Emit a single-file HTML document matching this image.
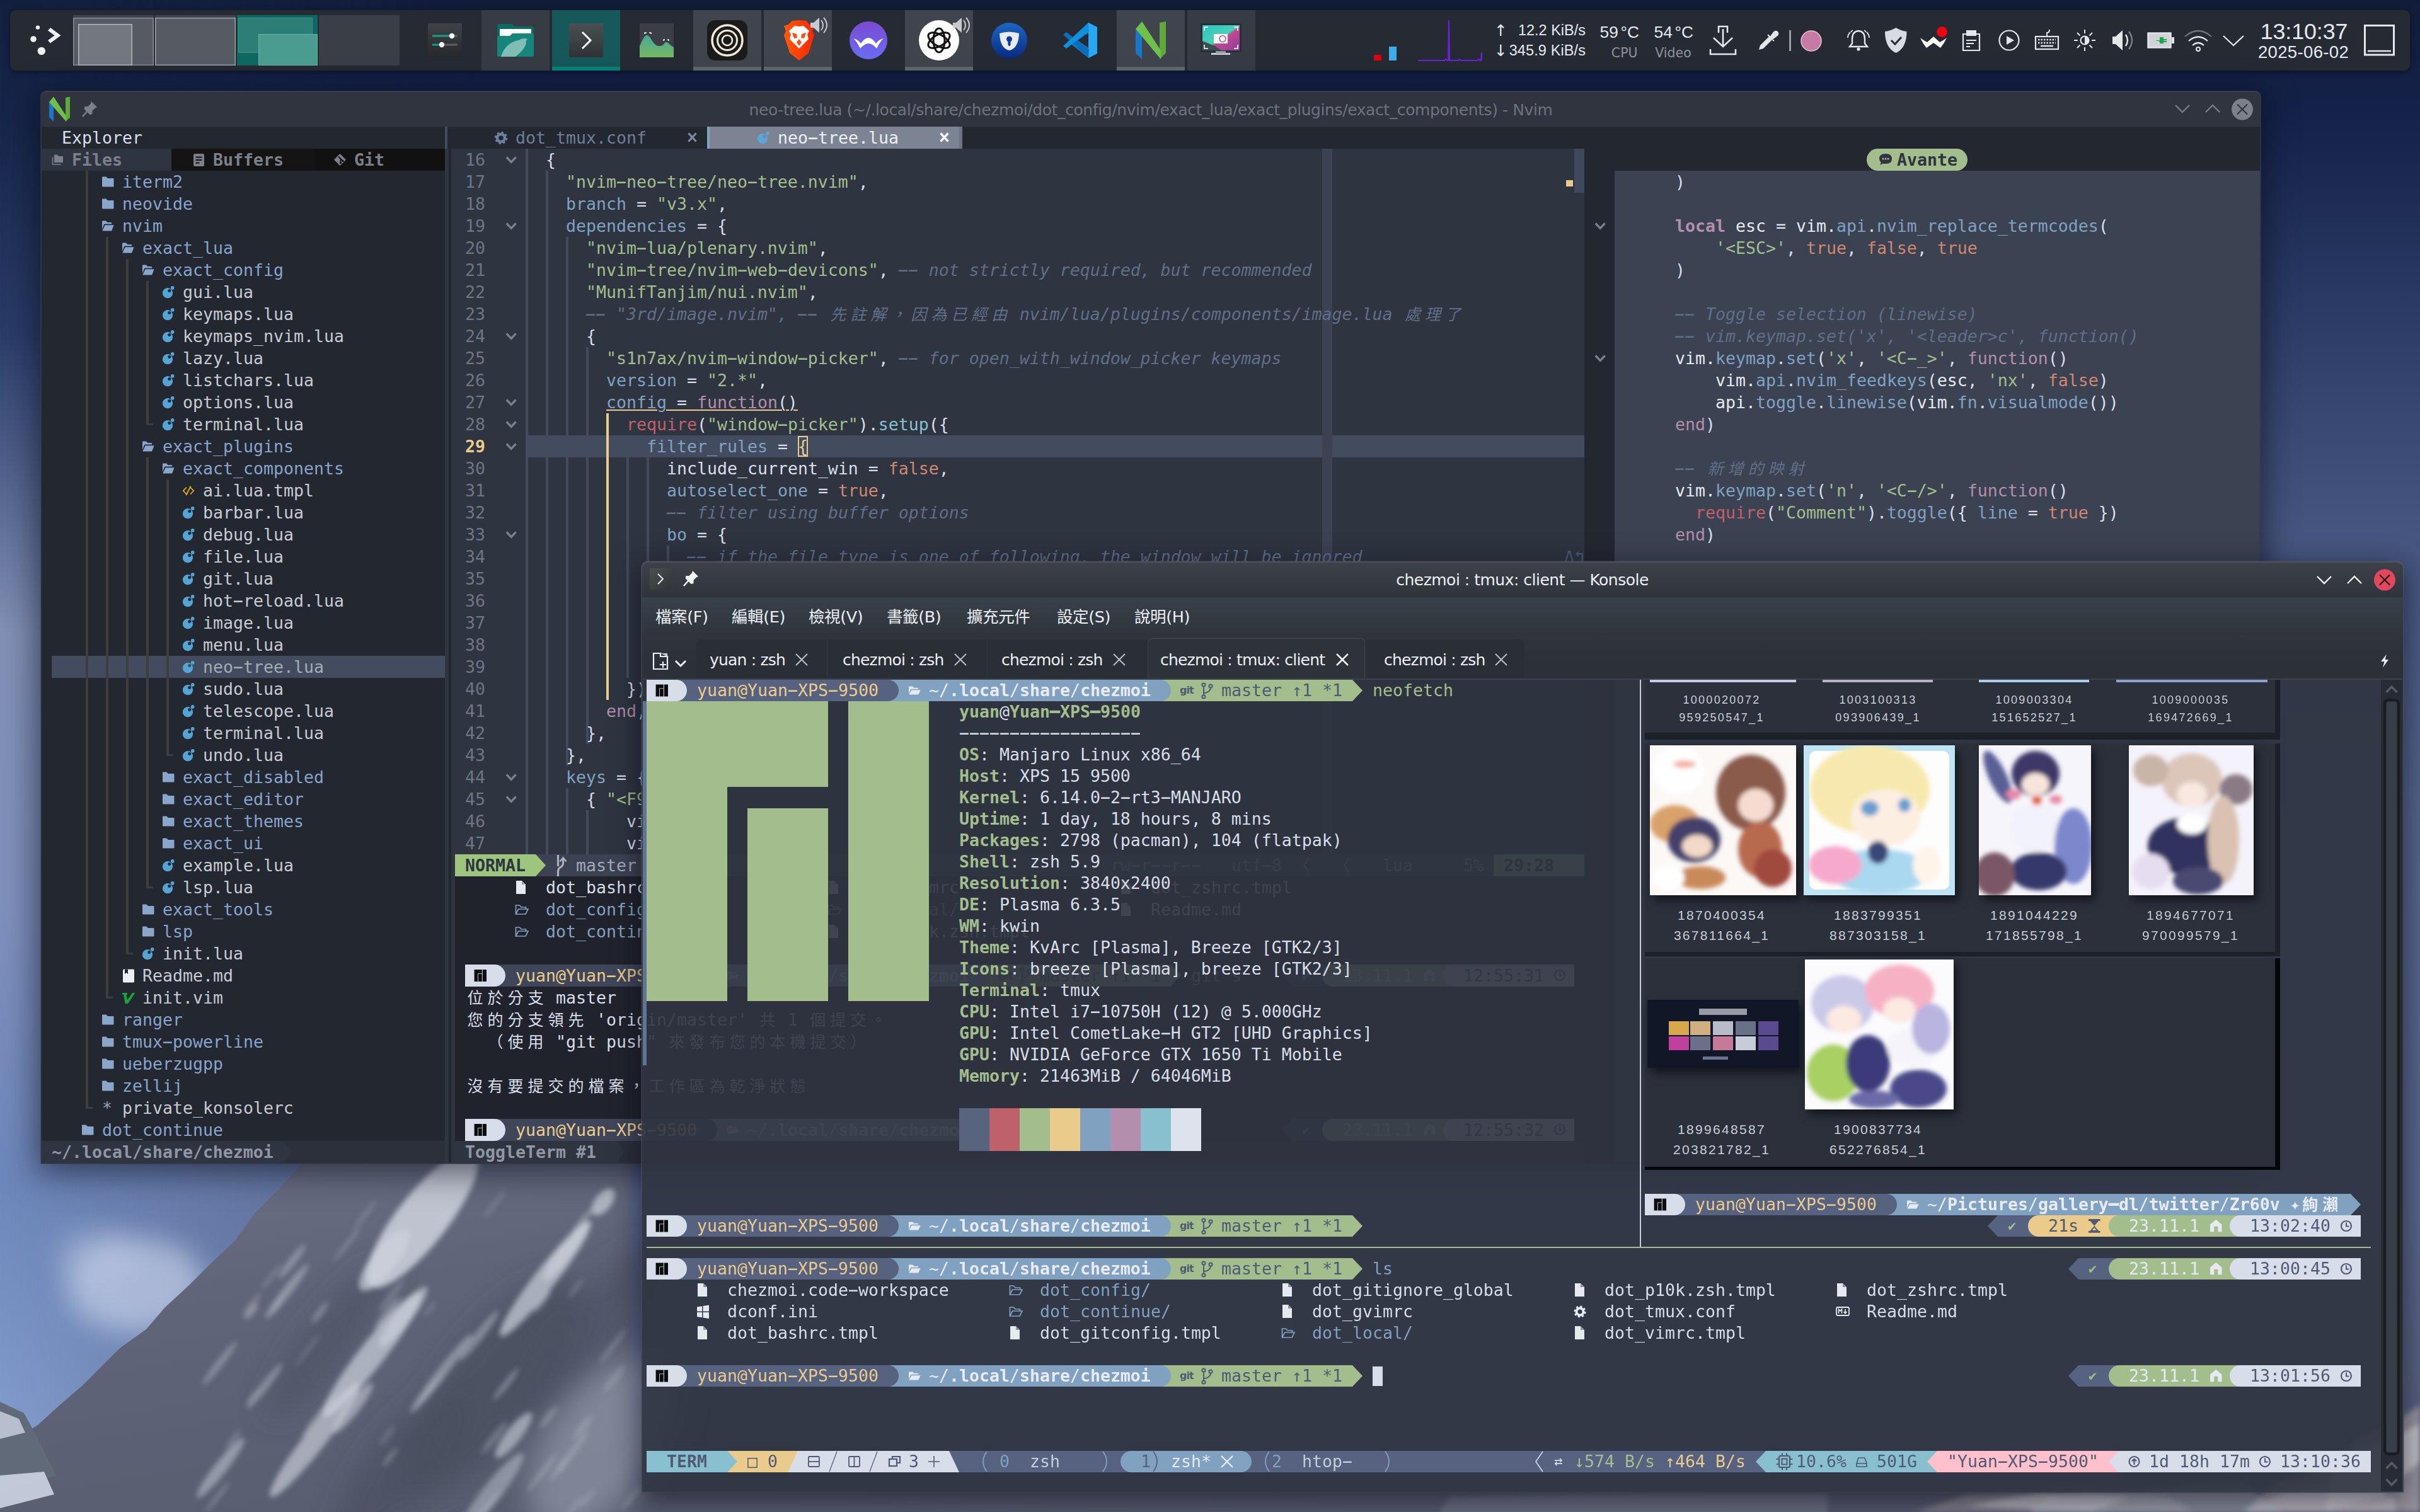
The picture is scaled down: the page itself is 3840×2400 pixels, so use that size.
<!DOCTYPE html><html><head><meta charset="utf-8"><title>desktop</title><style>
html,body{margin:0;padding:0}
body{width:3840px;height:2400px;overflow:hidden;position:relative;background:#1a2648;font-family:"Liberation Sans","Noto Sans CJK TC",sans-serif}
.a{position:absolute;display:block}
i.a{font-style:normal}
.g{white-space:pre;font:26.576px/35px "DejaVu Sans Mono","Noto Sans CJK TC",monospace;height:35px;color:#d8dee9}
.k{white-space:pre;font:26.576px/34px "DejaVu Sans Mono","Noto Sans CJK TC",monospace;height:34px;color:#d8dee9}
b.w{display:inline-block;width:32px;text-align:center;font-weight:inherit;font-size:25px}
b.h{display:inline-block;font-weight:inherit;transform:translateY(-1px) scale(2.02,1.15)}
.ui{white-space:pre;font-family:"DejaVu Sans","Noto Sans CJK TC",sans-serif;color:#e5e9f0}
</style></head><body>
<svg class=a style="left:0;top:0" width="3840" height="2400" viewBox="0 0 3840 2400">
<defs>
<linearGradient id="sky" x1="0" y1="0" x2="0" y2="1">
<stop offset="0" stop-color="#13203f"/><stop offset="0.08" stop-color="#17264a"/><stop offset="0.22" stop-color="#2b3c68"/>
<stop offset="0.32" stop-color="#55658f"/><stop offset="0.42" stop-color="#8391b6"/><stop offset="0.6" stop-color="#7f90bc"/><stop offset="0.78" stop-color="#6d87bb"/><stop offset="1" stop-color="#89a3d3"/>
</linearGradient>
<linearGradient id="skyr" x1="0" y1="0" x2="0" y2="1">
<stop offset="0" stop-color="#111c3a"/><stop offset="0.08" stop-color="#15224a"/><stop offset="0.2" stop-color="#2a3a64"/>
<stop offset="0.35" stop-color="#46557f"/><stop offset="0.55" stop-color="#57668f"/><stop offset="0.8" stop-color="#5b678c"/><stop offset="1" stop-color="#565d78"/>
</linearGradient>
<linearGradient id="fade" x1="0" y1="0" x2="1" y2="0">
<stop offset="0" stop-color="#fff" stop-opacity="0"/><stop offset="0.03" stop-color="#fff" stop-opacity="0.15"/><stop offset="0.2" stop-color="#fff" stop-opacity="1"/><stop offset="1" stop-color="#fff" stop-opacity="1"/>
</linearGradient>
<mask id="mk"><rect width="3840" height="2400" fill="url(#fade)"/></mask>
<filter id="bl" x="-20%" y="-20%" width="140%" height="140%"><feGaussianBlur stdDeviation="4"/></filter>
<filter id="bl2" x="-30%" y="-30%" width="160%" height="160%"><feGaussianBlur stdDeviation="22"/></filter>
<linearGradient id="mt" x1="0" y1="0" x2="1" y2="1">
<stop offset="0" stop-color="#6b7086"/><stop offset="0.25" stop-color="#5f6478"/><stop offset="0.6" stop-color="#585d70"/><stop offset="1" stop-color="#53576a"/>
</linearGradient>
</defs>
<rect width="3840" height="2400" fill="url(#sky)"/>
<rect width="3840" height="2400" fill="url(#skyr)" mask="url(#mk)"/>
<ellipse cx="215" cy="2040" rx="110" ry="75" fill="#d3dcf0" opacity=".6" filter="url(#bl2)"/>
<ellipse cx="150" cy="1990" rx="60" ry="40" fill="#c3cee8" opacity=".35" filter="url(#bl2)"/>
<path d="M478 1848 L440 1890 L405 1925 L372 1970 L330 2010 L300 2040 L262 2075 L232 2110 L190 2140 L160 2170 L130 2200 L95 2230 L60 2262 L0 2300 L0 2400 L3840 2400 L3840 2262 L3800 2290 L3720 2335 L3560 2345 L3300 2362 L1000 2362 L1000 1848 Z" fill="url(#mt)"/>
<g filter="url(#bl2)"><ellipse cx="960" cy="2290" rx="165" ry="85" fill="#9a9eb0" opacity="0.6" transform="rotate(-52 960 2290)"/><ellipse cx="780" cy="2200" rx="210" ry="75" fill="#474c5c" opacity="0.7" transform="rotate(-52 780 2200)"/><ellipse cx="520" cy="2130" rx="150" ry="35" fill="#4b5061" opacity="0.6" transform="rotate(-52 520 2130)"/><ellipse cx="930" cy="2120" rx="180" ry="45" fill="#4a4f60" opacity="0.6" transform="rotate(-52 930 2120)"/><ellipse cx="640" cy="2330" rx="150" ry="55" fill="#484d5d" opacity="0.6" transform="rotate(-52 640 2330)"/></g>
<g filter="url(#bl)"><ellipse cx="670" cy="1935" rx="135" ry="40" fill="#cfd3de" opacity="0.85" transform="rotate(-52 670 1935)"/><ellipse cx="610" cy="2000" rx="60" ry="20" fill="#cfd3de" opacity="0.7" transform="rotate(-52 610 2000)"/><ellipse cx="865" cy="2030" rx="115" ry="17" fill="#cfd3de" opacity="0.7" transform="rotate(-52 865 2030)"/><ellipse cx="900" cy="1985" rx="60" ry="11" fill="#cfd3de" opacity="0.6" transform="rotate(-52 900 1985)"/><ellipse cx="590" cy="2150" rx="125" ry="20" fill="#cfd3de" opacity="0.7" transform="rotate(-52 590 2150)"/><ellipse cx="640" cy="2090" rx="60" ry="13" fill="#cfd3de" opacity="0.6" transform="rotate(-52 640 2090)"/><ellipse cx="500" cy="2285" rx="115" ry="17" fill="#cfd3de" opacity="0.65" transform="rotate(-52 500 2285)"/><ellipse cx="560" cy="2235" rx="50" ry="10" fill="#cfd3de" opacity="0.55" transform="rotate(-52 560 2235)"/><ellipse cx="957" cy="1908" rx="25" ry="13" fill="#cfd3de" opacity="0.7" transform="rotate(-52 957 1908)"/><ellipse cx="815" cy="2278" rx="45" ry="12" fill="#cfd3de" opacity="0.6" transform="rotate(-52 815 2278)"/><ellipse cx="455" cy="2050" rx="55" ry="7" fill="#cfd3de" opacity="0.45" transform="rotate(-52 455 2050)"/><ellipse cx="700" cy="2180" rx="80" ry="8" fill="#cfd3de" opacity="0.45" transform="rotate(-52 700 2180)"/><ellipse cx="760" cy="2120" rx="50" ry="7" fill="#cfd3de" opacity="0.4" transform="rotate(-52 760 2120)"/><ellipse cx="420" cy="2200" rx="45" ry="6" fill="#cfd3de" opacity="0.4" transform="rotate(-52 420 2200)"/><ellipse cx="350" cy="2330" rx="60" ry="10" fill="#cfd3de" opacity="0.5" transform="rotate(-52 350 2330)"/><ellipse cx="780" cy="2370" rx="80" ry="15" fill="#cfd3de" opacity="0.45" transform="rotate(-52 780 2370)"/><ellipse cx="550.206" cy="1975.42" rx="34.528" ry="2.75353" fill="#cfd3de" opacity="0.333971" transform="rotate(-52 550.206 1975.42)"/><ellipse cx="578.668" cy="1929" rx="30.2231" ry="2.63123" fill="#cfd3de" opacity="0.308411" transform="rotate(-52 578.668 1929)"/><ellipse cx="618.673" cy="2313.43" rx="18.7141" ry="3.28134" fill="#cfd3de" opacity="0.356858" transform="rotate(-52 618.673 2313.43)"/><ellipse cx="974.442" cy="2188.55" rx="26.9004" ry="5.91689" fill="#cfd3de" opacity="0.211646" transform="rotate(-52 974.442 2188.55)"/><ellipse cx="913.759" cy="2044.8" rx="19.3277" ry="2.91227" fill="#cfd3de" opacity="0.27712" transform="rotate(-52 913.759 2044.8)"/><ellipse cx="884.966" cy="1990.36" rx="32.448" ry="4.7362" fill="#cfd3de" opacity="0.293099" transform="rotate(-52 884.966 1990.36)"/><ellipse cx="702.466" cy="1931.39" rx="16.788" ry="3.22086" fill="#cfd3de" opacity="0.3701" transform="rotate(-52 702.466 1931.39)"/><ellipse cx="620.763" cy="2057.07" rx="32.5669" ry="4.08615" fill="#cfd3de" opacity="0.274942" transform="rotate(-52 620.763 2057.07)"/><ellipse cx="870.178" cy="2249.5" rx="22.3229" ry="4.51048" fill="#cfd3de" opacity="0.331299" transform="rotate(-52 870.178 2249.5)"/><ellipse cx="925.093" cy="2264.72" rx="23.6381" ry="5.93061" fill="#cfd3de" opacity="0.229516" transform="rotate(-52 925.093 2264.72)"/><ellipse cx="614.324" cy="2278.57" rx="19.5595" ry="4.21137" fill="#cfd3de" opacity="0.209802" transform="rotate(-52 614.324 2278.57)"/><ellipse cx="784.387" cy="2282.29" rx="32.1908" ry="5.56417" fill="#cfd3de" opacity="0.278437" transform="rotate(-52 784.387 2282.29)"/><ellipse cx="802.801" cy="2197.18" rx="32.3969" ry="4.09672" fill="#cfd3de" opacity="0.409992" transform="rotate(-52 802.801 2197.18)"/><ellipse cx="972.383" cy="2137.05" rx="34.9246" ry="2.71234" fill="#cfd3de" opacity="0.375373" transform="rotate(-52 972.383 2137.05)"/><ellipse cx="770.048" cy="2396.55" rx="39.6577" ry="3.49608" fill="#cfd3de" opacity="0.296448" transform="rotate(-52 770.048 2396.55)"/><ellipse cx="784.684" cy="1911.28" rx="28.8509" ry="3.08817" fill="#cfd3de" opacity="0.229274" transform="rotate(-52 784.684 1911.28)"/><ellipse cx="370.089" cy="2284.12" rx="18.8802" ry="3.36665" fill="#cfd3de" opacity="0.297737" transform="rotate(-52 370.089 2284.12)"/><ellipse cx="922.567" cy="1940.29" rx="28.4756" ry="4.42304" fill="#cfd3de" opacity="0.420846" transform="rotate(-52 922.567 1940.29)"/><ellipse cx="887.11" cy="2331.99" rx="23.3526" ry="3.95354" fill="#cfd3de" opacity="0.289693" transform="rotate(-52 887.11 2331.99)"/><ellipse cx="931.251" cy="2378.87" rx="19.5276" ry="3.11676" fill="#cfd3de" opacity="0.257989" transform="rotate(-52 931.251 2378.87)"/><ellipse cx="488.669" cy="2142.48" rx="32.6737" ry="3.41961" fill="#cfd3de" opacity="0.201023" transform="rotate(-52 488.669 2142.48)"/><ellipse cx="614.884" cy="2084.63" rx="31.9902" ry="5.83584" fill="#cfd3de" opacity="0.372623" transform="rotate(-52 614.884 2084.63)"/><ellipse cx="680.534" cy="2208.8" rx="35.286" ry="2.68898" fill="#cfd3de" opacity="0.424883" transform="rotate(-52 680.534 2208.8)"/><ellipse cx="860.379" cy="2337.26" rx="38.9362" ry="3.87333" fill="#cfd3de" opacity="0.299745" transform="rotate(-52 860.379 2337.26)"/><ellipse cx="400.405" cy="2217.14" rx="16.8674" ry="2.73572" fill="#cfd3de" opacity="0.252191" transform="rotate(-52 400.405 2217.14)"/><ellipse cx="440.366" cy="2070.03" rx="16.5773" ry="2.50082" fill="#cfd3de" opacity="0.237816" transform="rotate(-52 440.366 2070.03)"/><ellipse cx="398.996" cy="2081.8" rx="15.765" ry="5.56016" fill="#cfd3de" opacity="0.353517" transform="rotate(-52 398.996 2081.8)"/><ellipse cx="431.014" cy="2026.13" rx="25.4217" ry="3.77457" fill="#cfd3de" opacity="0.230711" transform="rotate(-52 431.014 2026.13)"/><ellipse cx="907.277" cy="2396.55" rx="28.9797" ry="4.19342" fill="#cfd3de" opacity="0.221471" transform="rotate(-52 907.277 2396.55)"/><ellipse cx="399.488" cy="2071.32" rx="22.9427" ry="5.40099" fill="#cfd3de" opacity="0.24036" transform="rotate(-52 399.488 2071.32)"/><ellipse cx="345.705" cy="2375.49" rx="30.8477" ry="3.01311" fill="#cfd3de" opacity="0.335793" transform="rotate(-52 345.705 2375.49)"/><ellipse cx="348.389" cy="2164.05" rx="44.355" ry="5.52164" fill="#cfd3de" opacity="0.374049" transform="rotate(-52 348.389 2164.05)"/><ellipse cx="507.558" cy="2083.35" rx="20.0113" ry="5.20178" fill="#cfd3de" opacity="0.333148" transform="rotate(-52 507.558 2083.35)"/><ellipse cx="859.757" cy="2064.83" rx="21.6913" ry="5.34029" fill="#cfd3de" opacity="0.446232" transform="rotate(-52 859.757 2064.83)"/><ellipse cx="909.788" cy="2303.04" rx="39.55" ry="5.08956" fill="#cfd3de" opacity="0.256685" transform="rotate(-52 909.788 2303.04)"/><ellipse cx="681.994" cy="2077.78" rx="15.8694" ry="2.59778" fill="#cfd3de" opacity="0.269855" transform="rotate(-52 681.994 2077.78)"/><ellipse cx="506.239" cy="2246.26" rx="43.6955" ry="4.0653" fill="#cfd3de" opacity="0.434255" transform="rotate(-52 506.239 2246.26)"/><ellipse cx="1001.87" cy="2377.5" rx="25.9391" ry="3.27162" fill="#cfd3de" opacity="0.256711" transform="rotate(-52 1001.87 2377.5)"/><ellipse cx="463.76" cy="2002.19" rx="33.722" ry="5.65108" fill="#cfd3de" opacity="0.410109" transform="rotate(-52 463.76 2002.19)"/>
<path d="M3560 2400 l40 -40 l90 -30 l60 -50 l60 -30 l30 -20 l0 170 z" fill="#9c98a2" opacity=".95"/><path d="M3700 2340 l60 -40 l80 -40 l0 60 l-60 50 l-90 30 z" fill="#cfccd4" opacity=".85"/><path d="M3560 2400 l60 -30 l120 -20 l60 30 l0 20 z" fill="#c4c1c9" opacity=".7"/><path d="M3040 2400 l80 -28 l200 -8 l120 12 l40 24 z" fill="#8b8791" opacity=".8"/><path d="M3120 2390 l120 -20 l140 6 l-60 24 z" fill="#c9c6ce" opacity=".7"/>
<path d="M3250 2372 l150 -8 l160 -12 l60 50 l-400 0 z" fill="#b9bdca" opacity=".5"/>
<path d="M2300 2375 l300 -6 l300 0 l0 40 l-620 0 z" fill="#8d91a2" opacity=".35"/>
</g>
<path d="M0 2225 l38 18 l22 40 l30 60 l-90 20 z" fill="#606a78"/>
<path d="M0 2240 l30 12 l10 22 l-40 10 z" fill="#cdd5e4" opacity=".8"/>
<path d="M0 2342 l70 -6 l16 36 l-86 22 z" fill="#d3dbea" opacity=".85"/>
</svg>
<i class=a style="left:16px;top:16px;width:3808px;height:96px;background:#262b33;border-radius:9px;box-shadow:0 2px 10px rgba(0,0,0,.45)"></i>
<svg class=a style="left:44px;top:36px;" width="60" height="56" viewBox="0 0 60 56"><g fill="#eef0f3"><circle cx="16" cy="7.6" r="3.2"/><circle cx="9" cy="26" r="4.8"/><circle cx="21.8" cy="45" r="6.2"/><path d="M32 12.5l4-4.5 16.5 12.2L36 32.5l-4-4.6 10.5-7.7z"/></g></svg>
<i class=a style="left:116px;top:24px;width:128px;height:80px;background:#3f444d;"></i>
<i class=a style="left:116px;top:28px;width:128px;height:76px;background:#555a63;box-shadow:inset 0 0 0 1.500px #888b91"></i>
<i class=a style="left:124px;top:38px;width:86px;height:66px;background:#73777f;box-shadow:inset 0 0 0 1.5px #b3b6bb"></i>
<i class=a style="left:246px;top:24px;width:128px;height:80px;background:#3f444d;"></i>
<i class=a style="left:246px;top:28px;width:128px;height:76px;background:#555a63;box-shadow:inset 0 0 0 1.5px #9da0a6"></i>
<i class=a style="left:376px;top:24px;width:128px;height:80px;background:#0f6761;"></i>
<i class=a style="left:378px;top:28px;width:118px;height:56px;background:#2b7f76;box-shadow:inset 0 0 0 1px #3f9288"></i>
<i class=a style="left:410px;top:54px;width:94px;height:50px;background:#4a9c91;box-shadow:inset 0 0 0 1px #66b3a8"></i>
<i class=a style="left:506px;top:24px;width:128px;height:80px;background:#393e47;"></i>
<i class=a style="left:764px;top:16px;width:108px;height:96px;background:#363b44;"></i>
<i class=a style="left:876px;top:16px;width:108px;height:96px;background:#17585a;"></i>
<i class=a style="left:876px;top:106px;width:108px;height:6px;background:#068478;"></i>
<i class=a style="left:1100px;top:16px;width:108px;height:96px;background:#3f444d;"></i>
<i class=a style="left:1100px;top:106px;width:108px;height:6px;background:#62666d;"></i>
<i class=a style="left:1212px;top:16px;width:108px;height:96px;background:#3f444d;"></i>
<i class=a style="left:1212px;top:106px;width:108px;height:6px;background:#62666d;"></i>
<i class=a style="left:1436px;top:16px;width:108px;height:96px;background:#3f444d;"></i>
<i class=a style="left:1436px;top:106px;width:108px;height:6px;background:#62666d;"></i>
<i class=a style="left:1772px;top:16px;width:108px;height:96px;background:#3f444d;"></i>
<i class=a style="left:1772px;top:106px;width:108px;height:6px;background:#62666d;"></i>
<i class=a style="left:1884px;top:16px;width:108px;height:96px;background:#363b44;"></i>
<svg class=a style="left:679px;top:37px;" width="54" height="54" viewBox="0 0 54 54"><defs><linearGradient id="dk" x1="0" y1="0" x2="0" y2="1"><stop offset="0" stop-color="#404349"/><stop offset="1" stop-color="#25272b"/></linearGradient></defs><rect width="54" height="54" rx="2" fill="url(#dk)"/><path d="M7 20h32M7 34h16" stroke="#16a085" stroke-width="3"/><path d="M39 20h8M23 34h24" stroke="#5a5e66" stroke-width="3"/><circle cx="38" cy="20" r="4.2" fill="#fff"/><circle cx="22" cy="34" r="4.2" fill="#fff"/></svg>
<svg class=a style="left:789px;top:37px;" width="58" height="54" viewBox="0 0 58 54"><path d="M0 4q0-3 3-3h20l4 4h28q3 0 3 3v42q0 3-3 3H3q-3 0-3-3z" fill="#0a6b62"/><rect x="4" y="9" width="50" height="20" fill="#fdfdfd"/><path d="M0 22q0-2 2-2h18l4-4h32q2 0 2 2v32q0 3-3 3H3q-3 0-3-3z" fill="#16857a"/><path d="M6 53c4-14 14-24 28-26 4-3 10-4 14-2-2 2-3 4-2 6-2 8-8 15-17 22z" fill="#7fbdb5"/></svg>
<svg class=a style="left:903px;top:37px;" width="54" height="54" viewBox="0 0 54 54"><rect width="54" height="54" rx="2" fill="url(#dk2)"/><defs><linearGradient id="dk2" x1="0" y1="0" x2="0" y2="1"><stop offset="0" stop-color="#4a5052"/><stop offset="1" stop-color="#2f3335"/></linearGradient></defs><path d="M21 14l13 13-13 13" fill="none" stroke="#fff" stroke-width="3"/></svg>
<svg class=a style="left:1015px;top:37px;" width="54" height="54" viewBox="0 0 54 54"><defs><linearGradient id="gm" x1="0" y1="0" x2="0" y2="1"><stop offset="0" stop-color="#4aa89a"/><stop offset="1" stop-color="#74b860"/></linearGradient></defs><rect width="54" height="54" fill="#3b3f45"/><path d="M0 36c4-8 7-17 12-17s9 16 18 17 8-6 12-6 6 5 12 8v16H0z" fill="url(#gm)"/><path d="M8 17v-2h3m4 0h3v2M38 28v-2h2m4 0h2v2" stroke="#fff" stroke-width="1.3" fill="none"/></svg>
<svg class=a style="left:1122px;top:32px;" width="64" height="64" viewBox="0 0 64 64"><rect width="64" height="64" rx="13" fill="#1b1b1b"/><g fill="none" stroke="#efe9d6"><circle cx="32" cy="32" r="24" stroke-width="3.5"/><circle cx="32" cy="32" r="15.5" stroke-width="3"/><circle cx="32" cy="32" r="8" stroke-width="2.6"/></g></svg>
<svg class=a style="left:1238px;top:30px;" width="60" height="68" viewBox="0 0 60 68"><defs><linearGradient id="br" x1="0" y1="0" x2="1" y2="0"><stop offset="0" stop-color="#ff5a0a"/><stop offset="1" stop-color="#ff2500"/></linearGradient></defs><path d="M30 2l11 1 6 6 7 2-3 8 3 7-9 28-15 12-15-12-9-28 3-7-3-8 7-2 6-6z" fill="url(#br)"/><path d="M30 12l7-1 9 8-3 6 2 7-8 8-7 7-7-7-8-8 2-7-3-6 9-8z" fill="#fff"/><path d="M19 22l7 2 1 6-5 1zM41 22l-7 2-1 6 5 1zM30 32l4 5-4 6-4-6z" fill="#ff4a10"/></svg>
<svg class=a style="left:1284px;top:27px;" width="30" height="26" viewBox="0 0 30 26"><path d="M2 9h5l9-8v24l-9-8H2z" fill="#c8cacd"/><path d="M19 5q6 8 0 16M23 1q10 12 0 24" fill="none" stroke="#c8cacd" stroke-width="2"/></svg>
<svg class=a style="left:1348px;top:34px;" width="60" height="60" viewBox="0 0 60 60"><defs><linearGradient id="pw" x1="0" y1="0" x2="0" y2="1"><stop offset="0" stop-color="#7a4bd2"/><stop offset="1" stop-color="#6b6cf4"/></linearGradient></defs><circle cx="30" cy="30" r="30" fill="url(#pw)"/><path d="M6 27q8 2 12 8 6-9 12-9t12 9q4-6 12-8-5 4-11 16-7-8-13-8t-13 8Q11 31 6 27z" fill="#fff"/></svg>
<svg class=a style="left:1458px;top:32px;" width="64" height="64" viewBox="0 0 64 64"><circle cx="32" cy="32" r="32" fill="#fff"/><g fill="none" stroke="#111" stroke-width="3"><ellipse cx="32" cy="32" rx="9" ry="19"/><ellipse cx="32" cy="32" rx="9" ry="19" transform="rotate(60 32 32)"/><ellipse cx="32" cy="32" rx="9" ry="19" transform="rotate(120 32 32)"/></g></svg>
<svg class=a style="left:1510px;top:27px;" width="30" height="26" viewBox="0 0 30 26"><path d="M2 9h5l9-8v24l-9-8H2z" fill="#c8cacd"/><path d="M19 5q6 8 0 16M23 1q10 12 0 24" fill="none" stroke="#c8cacd" stroke-width="2"/></svg>
<svg class=a style="left:1573px;top:36px;" width="57" height="57" viewBox="0 0 57 57"><defs><linearGradient id="bw" x1="0" y1="0" x2="0" y2="1"><stop offset="0" stop-color="#1c66c4"/><stop offset="1" stop-color="#082a82"/></linearGradient></defs><circle cx="28.5" cy="28.5" r="28.5" fill="url(#bw)"/><path d="M13 17q15-5 31 0-1 24-15.500 27Q14 41 13 17z" fill="#e8ebf5"/><circle cx="28.500" cy="26" r="4.500" fill="#0b3a98"/><rect x="26.500" y="28" width="4" height="9" rx="2" fill="#0b3a98"/></svg>
<svg class=a style="left:1685px;top:35px;" width="58" height="58" viewBox="0 0 58 58"><path d="M42 1l14 7v42l-14 7-30-24z" fill="#0a7fd0"/><path d="M42 1l14 7v42l-14 7z" fill="#2aa7f2"/><path d="M2 20l5-4 36 27-1 14z" fill="#0b6fb8"/><path d="M2 38l5 4 36-27-1-14z" fill="#1190e0"/><path d="M42 17v24L25 29z" fill="#262b33"/></svg>
<svg class=a style="left:1800px;top:32px;" width="52" height="64" viewBox="0 0 52 64"><path d="M2 14l10-10v58L2 52z" fill="#1976c8"/><path d="M40 4l10-2v50L40 62z" fill="#5fa83c"/><path d="M12 2l30 46v14L2 14z" fill="#6fbf4a"/></svg>
<svg class=a style="left:1905px;top:37px;" width="65" height="54" viewBox="0 0 65 54"><rect x="0" y="0" width="65" height="46" fill="#2a2e36"/><defs><linearGradient id="sp" x1="0" y1="0" x2="1" y2="1"><stop offset="0" stop-color="#2fc4c0"/><stop offset="0.5" stop-color="#49d0b8"/><stop offset="0.55" stop-color="#c24a90"/><stop offset="1" stop-color="#8e3c9a"/></linearGradient></defs><rect x="3" y="3" width="59" height="40" fill="url(#sp)"/><path d="M3 43V28l20 8 10 7z" fill="#3a5050"/><rect x="21" y="17" width="22" height="15" fill="#fff"/><circle cx="35" cy="24.500" r="5" fill="none" stroke="#d04080" stroke-width="1.500"/><rect x="17" y="47" width="30" height="3" fill="#c8ccd2"/><rect x="24" y="44" width="16" height="4" fill="#9a9ea6"/><path d="M6 12V6h6M53 6h6v6M6 34v6h6M53 40h6v-6" fill="none" stroke="#fff" stroke-width="1.500"/></svg>
<i class=a style="left:2180px;top:86.5px;width:12px;height:9.5px;background:#e00010;"></i>
<i class=a style="left:2204px;top:74px;width:12px;height:22px;background:#3daee9;"></i>
<svg class=a style="left:2248px;top:30px;" width="110" height="68" viewBox="0 0 110 68"><path d="M2 66h42l2-2 2 2h2l1-64 1 64h14l2-2 2 2h26l2-2 2 2h2l1-13v13" fill="none" stroke="#6a22e0" stroke-width="2"/></svg>
<div class=a style="top:35.85px;font:25px/25px 'DejaVu Sans','Noto Sans CJK TC',sans-serif;color:#e5e9f0;white-space:pre;left:2371px;">↑</div>
<div class=a style="top:67.85px;font:25px/25px 'DejaVu Sans','Noto Sans CJK TC',sans-serif;color:#e5e9f0;white-space:pre;left:2371px;">↓</div>
<div class=a style="top:37.12px;font:23.5px/23.5px 'Liberation Sans','Noto Sans CJK TC',sans-serif;color:#e5e9f0;white-space:pre;left:1916px;width:600px;text-align:right;">12.2 KiB/s</div>
<div class=a style="top:69.12px;font:23.5px/23.5px 'Liberation Sans','Noto Sans CJK TC',sans-serif;color:#e5e9f0;white-space:pre;letter-spacing:0.1px;left:1916px;width:600px;text-align:right;">345.9 KiB/s</div>
<div class=a style="top:37.75px;font:26.3px/26.3px 'Liberation Sans','Noto Sans CJK TC',sans-serif;color:#e5e9f0;white-space:pre;left:2538.5px;word-spacing:-3.500px">59 °C</div>
<div class=a style="top:73.66px;font:20.5px/20.5px 'DejaVu Sans','Noto Sans CJK TC',sans-serif;color:#8e939b;white-space:pre;left:1998.5px;width:600px;text-align:right;">CPU</div>
<div class=a style="top:37.75px;font:26.3px/26.3px 'Liberation Sans','Noto Sans CJK TC',sans-serif;color:#e5e9f0;white-space:pre;left:2624.5px;word-spacing:-3.500px">54 °C</div>
<div class=a style="top:73.66px;font:20.5px/20.5px 'DejaVu Sans','Noto Sans CJK TC',sans-serif;color:#8e939b;white-space:pre;left:1655px;width:2000px;text-align:center;">Video</div>
<svg class=a style="left:2712px;top:40px;" width="44" height="48" viewBox="0 0 44 48"><path d="M15 12V2h14v10M22 6v26M7 20l15 14 15-14M2 38v8h40v-8" fill="none" stroke="#e3e6ea" stroke-width="2.600"/></svg>
<svg class=a style="left:2788px;top:46px;" width="36" height="36" viewBox="0 0 36 36"><path d="M3 33l2-7 14-14 5 5-14 14z" fill="#e3e6ea"/><path d="M17 9l10 10M21 13l6-8q4-3 6 1 1 3-2 5l-7 5z" fill="#e3e6ea" stroke="#e3e6ea" stroke-width="2"/></svg>
<i class=a style="left:2839px;top:48px;width:3px;height:33px;background:#9a9ea6;"></i>
<svg class=a style="left:2856px;top:47px;" width="36" height="36" viewBox="0 0 36 36"><circle cx="18" cy="18" r="16" fill="#c57ba3" stroke="#e6c3d6" stroke-width="1.500"/></svg>
<svg class=a style="left:2930px;top:45px;" width="38" height="38" viewBox="0 0 38 38"><path d="M19 4q-10 1-10 13v7l-4 5h28l-4-5v-7q0-12-10-13z" fill="none" stroke="#e3e6ea" stroke-width="2.400"/><circle cx="19" cy="33" r="2.600" fill="#e3e6ea"/><path d="M6 6q-4 4-4 9M32 6q4 4 4 9M10 3q-2 1-3 3M28 3q2 1 3 3" fill="none" stroke="#e3e6ea" stroke-width="1.800"/></svg>
<svg class=a style="left:2990px;top:43px;" width="37" height="42" viewBox="0 0 37 42"><path d="M18.500 1q8 5 17 6 0 26-17 34Q1 33 1 7q9-1 17.500-6z" fill="#d8dce2"/><path d="M11 21l6 6 10-11" fill="none" stroke="#262b33" stroke-width="3"/></svg>
<svg class=a style="left:3046px;top:40px;" width="48" height="36" viewBox="0 0 48 36"><path d="M1 20q5 4 11 7l10-9 10 9q6-3 11-7-4 9-10 16l-11-8-11 8Q5 29 1 20z" fill="#fff"/><circle cx="35.500" cy="10.600" r="8.300" fill="#f50010"/></svg>
<svg class=a style="left:3112px;top:46px;" width="32" height="36" viewBox="0 0 32 36"><path d="M3 8h26v26H3z" fill="none" stroke="#e3e6ea" stroke-width="2.200"/><rect x="8" y="2" width="16" height="9" fill="#e3e6ea"/><path d="M8 18h16M8 23h12M8 28h6" stroke="#e3e6ea" stroke-width="2"/></svg>
<svg class=a style="left:3170px;top:46px;" width="36" height="36" viewBox="0 0 36 36"><circle cx="18" cy="18" r="15.500" fill="none" stroke="#e3e6ea" stroke-width="2.200"/><path d="M14 11l12 7-12 7z" fill="#e3e6ea"/></svg>
<svg class=a style="left:3228px;top:46px;" width="40" height="36" viewBox="0 0 40 36"><path d="M20 12V6q4 0 4-5" fill="none" stroke="#e3e6ea" stroke-width="2"/><rect x="2" y="12" width="36" height="20" fill="none" stroke="#e3e6ea" stroke-width="2.200"/><path d="M6 17h28M6 22h28" stroke="#e3e6ea" stroke-width="2.400" stroke-dasharray="2.500 2"/><path d="M10 27h20" stroke="#e3e6ea" stroke-width="2.400"/></svg>
<svg class=a style="left:3290px;top:46px;" width="36" height="36" viewBox="0 0 36 36"><circle cx="18" cy="18" r="6.500" fill="none" stroke="#e3e6ea" stroke-width="2.200"/><path d="M18 11.500a6.500 6.500 0 0 1 0 13z" fill="#e3e6ea"/><path d="M18 1v6M18 29v6M1 18h6M29 18h6M6 6l4.500 4.500M25.500 25.500L30 30M6 30l4.500-4.500M25.500 10.500L30 6" stroke="#e3e6ea" stroke-width="2"/></svg>
<svg class=a style="left:3350px;top:46px;" width="38" height="36" viewBox="0 0 38 36"><path d="M2 12h5l11-10v32L7 24H2z" fill="#e3e6ea"/><path d="M23 9q6 9 0 18" fill="none" stroke="#e3e6ea" stroke-width="2.400"/><path d="M28 4q10 14 0 28" fill="none" stroke="#7c8088" stroke-width="2.400"/></svg>
<svg class=a style="left:3407px;top:51px;" width="44" height="27" viewBox="0 0 44 27"><rect x="1.500" y="1.500" width="36" height="23" fill="#d0d4d9" stroke="#e3e6ea" stroke-width="2.400"/><rect x="39" y="8" width="4" height="10" fill="#e3e6ea"/><path d="M13 13h7v-5h6v3h5v2h-5v1h5v2h-5v2h-6v-3z" fill="#17a84b"/></svg>
<svg class=a style="left:3465px;top:46px;" width="46" height="38" viewBox="0 0 46 38"><path d="M2 12q21-18 42 0" fill="none" stroke="#6f747c" stroke-width="2.200"/><path d="M8 19q15-13 30 0M14 26q9-8 18 0" fill="none" stroke="#e3e6ea" stroke-width="2.200"/><circle cx="23" cy="32" r="3" fill="none" stroke="#e3e6ea" stroke-width="2"/></svg>
<svg class=a style="left:3526px;top:54px;" width="36" height="22" viewBox="0 0 36 22"><path d="M2 3l16 15L34 3" fill="none" stroke="#e3e6ea" stroke-width="2.200"/></svg>
<div class=a style="top:33.21px;font:35.8px/35.8px 'Liberation Sans','Noto Sans CJK TC',sans-serif;color:#e5e9f0;white-space:pre;letter-spacing:-0.1px;left:2656px;width:2000px;text-align:center;">13:10:37</div>
<div class=a style="top:68.73px;font:27.5px/27.5px 'Liberation Sans','Noto Sans CJK TC',sans-serif;color:#e5e9f0;white-space:pre;letter-spacing:0.35px;left:2655px;width:2000px;text-align:center;">2025-06-02</div>
<svg class=a style="left:3751px;top:39px;" width="50" height="50" viewBox="0 0 50 50"><rect x="1.500" y="1.500" width="46" height="46.500" fill="none" stroke="#e3e6ea" stroke-width="3"/><path d="M6 42h37" stroke="#e3e6ea" stroke-width="2.600"/></svg>
<i class=a style="left:65px;top:145px;width:3522px;height:1702px;background:#2f343f;border-radius:9px 9px 0 0;box-shadow:0 10px 50px 6px rgba(5,8,20,.55),0 0 0 1px rgba(90,96,110,.55)"></i>
<i class=a style="left:65px;top:145px;width:3522px;height:56px;background:#30343f;border-radius:9px 9px 0 0;box-shadow:inset 0 1px 0 rgba(255,255,255,.09)"></i>
<svg class=a style="left:77px;top:152px;" width="36" height="42" viewBox="0 0 36 42"><path d="M1 10l7-7v38l-7-7z" fill="#1976c8"/><path d="M27 3l7-1.500v33L27 41z" fill="#5fa83c"/><path d="M8 1.500l20 30.500v9L1 10z" fill="#6fbf4a"/></svg>
<svg class=a style="left:130px;top:160px;" width="26" height="26" viewBox="0 0 26 26"><path d="M15 1l9 9-3 1.500-4.500 4.500v5l-4 1-9-9 1-4h5L14 4.500z" fill="#7a7f8a"/><path d="M8 17l-7 8" stroke="#7a7f8a" stroke-width="2.600"/></svg>
<div class=a style="top:162.35px;font:25px/25px 'DejaVu Sans','Noto Sans CJK TC',sans-serif;color:#6e727c;white-space:pre;letter-spacing:-0.41px;left:826px;width:2000px;text-align:center;">neo-tree.lua (~/.local/share/chezmoi/dot_config/nvim/exact_lua/exact_plugins/exact_components) - Nvim</div>
<svg class=a style="left:3446px;top:156px;" width="130" height="36" viewBox="0 0 130 36"><path d="M6 11l11 11 11-11M54 22l11-11 11 11" fill="none" stroke="#7b808a" stroke-width="2.200"/><circle cx="112" cy="17.500" r="17" fill="#7b808a"/><path d="M104 9.500l16 16M120 9.500l-16 16" stroke="#2f343f" stroke-width="2.200"/></svg>
<i class=a style="left:66px;top:201px;width:3520px;height:1645px;background:#2e3440;"></i>
<i class=a style="left:66px;top:201px;width:3520px;height:35px;background:#232730;"></i>
<i class=a style="left:66px;top:236px;width:640px;height:1575px;background:#232730;"></i>
<i class=a style="left:706px;top:201px;width:4px;height:35px;background:#434c5e;"></i>
<i class=a style="left:706px;top:236px;width:6px;height:1610px;background:#2f3441;"></i>
<i class=a style="left:712px;top:236px;width:4px;height:1610px;background:#232730;"></i>
<div class="a g" style="left:98px;top:201px;">Explorer</div>
<i class=a style="left:66px;top:236px;width:206px;height:35px;background:#2e3440;"></i>
<i class=a style="left:272px;top:236px;width:226px;height:35px;background:#141414;"></i>
<i class=a style="left:498px;top:236px;width:208px;height:35px;background:#111111;"></i>
<svg class=a style="left:81px;top:236px;" width="24" height="35" viewBox="0 0 24 35"><path d="M5 9.500h5l2 2.500h7v10H5z" fill="#7b808a"/><path d="M2.500 13.500v11.500h13" fill="none" stroke="#7b808a" stroke-width="1.600"/></svg>
<div class="a g" style="left:114px;top:236px;"><span style="color:#7b808a;font-weight:bold;">Files</span></div>
<svg class=a style="left:305px;top:236px;" width="24" height="35" viewBox="0 0 24 35"><rect x="2" y="8" width="17" height="20" rx="2.500" fill="#7b808a"/><path d="M5.500 13.500h10M5.500 18h10M5.500 22.500h6" stroke="#141414" stroke-width="2"/></svg>
<div class="a g" style="left:338px;top:236px;"><span style="color:#7b808a;font-weight:bold;">Buffers</span></div>
<svg class=a style="left:529px;top:236px;" width="24" height="35" viewBox="0 0 24 35"><path d="M10.500 8l9.500 9.500-9.500 9.500L1 17.500z" fill="#7b808a"/><path d="M8 12.500l3.500 3.500v6M11.500 16l3 3" fill="none" stroke="#111" stroke-width="1.800"/><circle cx="11.500" cy="22.500" r="1.700" fill="#111"/><circle cx="15" cy="19.500" r="1.700" fill="#111"/></svg>
<div class="a g" style="left:562px;top:236px;"><span style="color:#7b808a;font-weight:bold;">Git</span></div>
<i class=a style="left:82px;top:1041px;width:624px;height:35px;background:#434c5e;"></i>
<i class=a style="left:136px;top:271px;width:4px;height:1488px;background:#3d3e40;"></i>
<i class=a style="left:136px;top:1757px;width:11px;height:3px;background:#3d3e40;"></i>
<i class=a style="left:168px;top:376px;width:4px;height:1208px;background:#3d3e40;"></i>
<i class=a style="left:168px;top:1582px;width:11px;height:3px;background:#3d3e40;"></i>
<i class=a style="left:200px;top:411px;width:4px;height:1103px;background:#3d3e40;"></i>
<i class=a style="left:200px;top:1512px;width:11px;height:3px;background:#3d3e40;"></i>
<i class=a style="left:232px;top:446px;width:4px;height:228px;background:#3d3e40;"></i>
<i class=a style="left:232px;top:672px;width:11px;height:3px;background:#3d3e40;"></i>
<i class=a style="left:232px;top:726px;width:4px;height:683px;background:#3d3e40;"></i>
<i class=a style="left:232px;top:1407px;width:11px;height:3px;background:#3d3e40;"></i>
<i class=a style="left:264px;top:761px;width:4px;height:438px;background:#3d3e40;"></i>
<i class=a style="left:264px;top:1197px;width:11px;height:3px;background:#3d3e40;"></i>
<svg class=a style="left:162px;top:271px;" width="24" height="35" viewBox="0 0 24 35"><path d="M0 10.300q0-.800.800-.800h5.700l2.300 2.500h8.900q.800 0 .800.800v11.800q0 .800-.800.800H.800q-.800 0-.800-.800z" fill="#8ba6cb"/></svg>
<div class="a g" style="left:194px;top:271px;"><span style="color:#86a4cd;">iterm2</span></div>
<svg class=a style="left:162px;top:306px;" width="24" height="35" viewBox="0 0 24 35"><path d="M0 10.300q0-.800.800-.800h5.700l2.300 2.500h8.900q.800 0 .800.800v11.800q0 .800-.800.800H.800q-.800 0-.800-.800z" fill="#8ba6cb"/></svg>
<div class="a g" style="left:194px;top:306px;"><span style="color:#86a4cd;">neovide</span></div>
<svg class=a style="left:162px;top:341px;" width="24" height="35" viewBox="0 0 24 35"><path d="M0 10.300q0-.800.800-.800h5.200l2.300 2.500h6q.800 0 .800.800v1.700H4.200q-.900 0-1.200.800L0 23z" fill="#8ba6cb"/><path d="M4.600 16.300h14l-3.200 8.500q-.300.700-1 .700H.300z" fill="#8ba6cb"/></svg>
<div class="a g" style="left:194px;top:341px;"><span style="color:#86a4cd;">nvim</span></div>
<svg class=a style="left:194px;top:376px;" width="24" height="35" viewBox="0 0 24 35"><path d="M0 10.300q0-.800.800-.800h5.200l2.300 2.500h6q.800 0 .800.800v1.700H4.200q-.900 0-1.200.800L0 23z" fill="#8ba6cb"/><path d="M4.600 16.300h14l-3.200 8.500q-.300.700-1 .700H.300z" fill="#8ba6cb"/></svg>
<div class="a g" style="left:226px;top:376px;"><span style="color:#86a4cd;">exact_lua</span></div>
<svg class=a style="left:226px;top:411px;" width="24" height="35" viewBox="0 0 24 35"><path d="M0 10.300q0-.800.800-.800h5.200l2.300 2.500h6q.800 0 .800.800v1.700H4.200q-.900 0-1.200.800L0 23z" fill="#8ba6cb"/><path d="M4.600 16.300h14l-3.200 8.500q-.300.700-1 .700H.300z" fill="#8ba6cb"/></svg>
<div class="a g" style="left:258px;top:411px;"><span style="color:#86a4cd;">exact_config</span></div>
<svg class=a style="left:258px;top:446px;" width="24" height="35" viewBox="0 0 24 35"><path fill-rule="evenodd" d="M8 11.100a8.100 8.100 0 1 0 0.010 0zM10.800 12.900a2.600 2.600 0 1 1-0.010 0z" fill="#54a4d6"/><circle cx="15.700" cy="10.900" r="2.800" fill="#54a4d6"/></svg>
<div class="a g" style="left:290px;top:446px;"><span style="color:#c6cad2;">gui.lua</span></div>
<svg class=a style="left:258px;top:481px;" width="24" height="35" viewBox="0 0 24 35"><path fill-rule="evenodd" d="M8 11.100a8.100 8.100 0 1 0 0.010 0zM10.800 12.900a2.600 2.600 0 1 1-0.010 0z" fill="#54a4d6"/><circle cx="15.700" cy="10.900" r="2.800" fill="#54a4d6"/></svg>
<div class="a g" style="left:290px;top:481px;"><span style="color:#c6cad2;">keymaps.lua</span></div>
<svg class=a style="left:258px;top:516px;" width="24" height="35" viewBox="0 0 24 35"><path fill-rule="evenodd" d="M8 11.100a8.100 8.100 0 1 0 0.010 0zM10.800 12.900a2.600 2.600 0 1 1-0.010 0z" fill="#54a4d6"/><circle cx="15.700" cy="10.900" r="2.800" fill="#54a4d6"/></svg>
<div class="a g" style="left:290px;top:516px;"><span style="color:#c6cad2;">keymaps_nvim.lua</span></div>
<svg class=a style="left:258px;top:551px;" width="24" height="35" viewBox="0 0 24 35"><path fill-rule="evenodd" d="M8 11.100a8.100 8.100 0 1 0 0.010 0zM10.800 12.900a2.600 2.600 0 1 1-0.010 0z" fill="#54a4d6"/><circle cx="15.700" cy="10.900" r="2.800" fill="#54a4d6"/></svg>
<div class="a g" style="left:290px;top:551px;"><span style="color:#c6cad2;">lazy.lua</span></div>
<svg class=a style="left:258px;top:586px;" width="24" height="35" viewBox="0 0 24 35"><path fill-rule="evenodd" d="M8 11.100a8.100 8.100 0 1 0 0.010 0zM10.800 12.900a2.600 2.600 0 1 1-0.010 0z" fill="#54a4d6"/><circle cx="15.700" cy="10.900" r="2.800" fill="#54a4d6"/></svg>
<div class="a g" style="left:290px;top:586px;"><span style="color:#c6cad2;">listchars.lua</span></div>
<svg class=a style="left:258px;top:621px;" width="24" height="35" viewBox="0 0 24 35"><path fill-rule="evenodd" d="M8 11.100a8.100 8.100 0 1 0 0.010 0zM10.800 12.900a2.600 2.600 0 1 1-0.010 0z" fill="#54a4d6"/><circle cx="15.700" cy="10.900" r="2.800" fill="#54a4d6"/></svg>
<div class="a g" style="left:290px;top:621px;"><span style="color:#c6cad2;">options.lua</span></div>
<svg class=a style="left:258px;top:656px;" width="24" height="35" viewBox="0 0 24 35"><path fill-rule="evenodd" d="M8 11.100a8.100 8.100 0 1 0 0.010 0zM10.800 12.900a2.600 2.600 0 1 1-0.010 0z" fill="#54a4d6"/><circle cx="15.700" cy="10.900" r="2.800" fill="#54a4d6"/></svg>
<div class="a g" style="left:290px;top:656px;"><span style="color:#c6cad2;">terminal.lua</span></div>
<svg class=a style="left:226px;top:691px;" width="24" height="35" viewBox="0 0 24 35"><path d="M0 10.300q0-.800.800-.800h5.200l2.300 2.500h6q.800 0 .800.800v1.700H4.200q-.900 0-1.200.800L0 23z" fill="#8ba6cb"/><path d="M4.600 16.300h14l-3.200 8.500q-.300.700-1 .700H.300z" fill="#8ba6cb"/></svg>
<div class="a g" style="left:258px;top:691px;"><span style="color:#86a4cd;">exact_plugins</span></div>
<svg class=a style="left:258px;top:726px;" width="24" height="35" viewBox="0 0 24 35"><path d="M0 10.300q0-.800.800-.800h5.200l2.300 2.500h6q.800 0 .800.800v1.700H4.200q-.900 0-1.200.800L0 23z" fill="#8ba6cb"/><path d="M4.600 16.300h14l-3.200 8.500q-.300.700-1 .700H.300z" fill="#8ba6cb"/></svg>
<div class="a g" style="left:290px;top:726px;"><span style="color:#86a4cd;">exact_components</span></div>
<svg class=a style="left:290px;top:761px;" width="24" height="35" viewBox="0 0 24 35"><path d="M6 12.500L0.800 18 6 23.500M12 12.500l5.200 5.500-5.200 5.500M12.500 10.600l-7 14.400" fill="none" stroke="#e0b020" stroke-width="1.800"/></svg>
<div class="a g" style="left:322px;top:761px;"><span style="color:#c6cad2;">ai.lua.tmpl</span></div>
<svg class=a style="left:290px;top:796px;" width="24" height="35" viewBox="0 0 24 35"><path fill-rule="evenodd" d="M8 11.100a8.100 8.100 0 1 0 0.010 0zM10.800 12.900a2.600 2.600 0 1 1-0.010 0z" fill="#54a4d6"/><circle cx="15.700" cy="10.900" r="2.800" fill="#54a4d6"/></svg>
<div class="a g" style="left:322px;top:796px;"><span style="color:#c6cad2;">barbar.lua</span></div>
<svg class=a style="left:290px;top:831px;" width="24" height="35" viewBox="0 0 24 35"><path fill-rule="evenodd" d="M8 11.100a8.100 8.100 0 1 0 0.010 0zM10.800 12.900a2.600 2.600 0 1 1-0.010 0z" fill="#54a4d6"/><circle cx="15.700" cy="10.900" r="2.800" fill="#54a4d6"/></svg>
<div class="a g" style="left:322px;top:831px;"><span style="color:#c6cad2;">debug.lua</span></div>
<svg class=a style="left:290px;top:866px;" width="24" height="35" viewBox="0 0 24 35"><path fill-rule="evenodd" d="M8 11.100a8.100 8.100 0 1 0 0.010 0zM10.800 12.900a2.600 2.600 0 1 1-0.010 0z" fill="#54a4d6"/><circle cx="15.700" cy="10.900" r="2.800" fill="#54a4d6"/></svg>
<div class="a g" style="left:322px;top:866px;"><span style="color:#c6cad2;">file.lua</span></div>
<svg class=a style="left:290px;top:901px;" width="24" height="35" viewBox="0 0 24 35"><path fill-rule="evenodd" d="M8 11.100a8.100 8.100 0 1 0 0.010 0zM10.800 12.900a2.600 2.600 0 1 1-0.010 0z" fill="#54a4d6"/><circle cx="15.700" cy="10.900" r="2.800" fill="#54a4d6"/></svg>
<div class="a g" style="left:322px;top:901px;"><span style="color:#c6cad2;">git.lua</span></div>
<svg class=a style="left:290px;top:936px;" width="24" height="35" viewBox="0 0 24 35"><path fill-rule="evenodd" d="M8 11.100a8.100 8.100 0 1 0 0.010 0zM10.800 12.900a2.600 2.600 0 1 1-0.010 0z" fill="#54a4d6"/><circle cx="15.700" cy="10.900" r="2.800" fill="#54a4d6"/></svg>
<div class="a g" style="left:322px;top:936px;"><span style="color:#c6cad2;">hot<b class=h>-</b>reload.lua</span></div>
<svg class=a style="left:290px;top:971px;" width="24" height="35" viewBox="0 0 24 35"><path fill-rule="evenodd" d="M8 11.100a8.100 8.100 0 1 0 0.010 0zM10.800 12.900a2.600 2.600 0 1 1-0.010 0z" fill="#54a4d6"/><circle cx="15.700" cy="10.900" r="2.800" fill="#54a4d6"/></svg>
<div class="a g" style="left:322px;top:971px;"><span style="color:#c6cad2;">image.lua</span></div>
<svg class=a style="left:290px;top:1006px;" width="24" height="35" viewBox="0 0 24 35"><path fill-rule="evenodd" d="M8 11.100a8.100 8.100 0 1 0 0.010 0zM10.800 12.900a2.600 2.600 0 1 1-0.010 0z" fill="#54a4d6"/><circle cx="15.700" cy="10.900" r="2.800" fill="#54a4d6"/></svg>
<div class="a g" style="left:322px;top:1006px;"><span style="color:#c6cad2;">menu.lua</span></div>
<svg class=a style="left:290px;top:1041px;" width="24" height="35" viewBox="0 0 24 35"><path fill-rule="evenodd" d="M8 11.100a8.100 8.100 0 1 0 0.010 0zM10.800 12.900a2.600 2.600 0 1 1-0.010 0z" fill="#54a4d6"/><circle cx="15.700" cy="10.900" r="2.800" fill="#54a4d6"/></svg>
<div class="a g" style="left:322px;top:1041px;"><span style="color:#a4aab7;">neo<b class=h>-</b>tree.lua</span></div>
<svg class=a style="left:290px;top:1076px;" width="24" height="35" viewBox="0 0 24 35"><path fill-rule="evenodd" d="M8 11.100a8.100 8.100 0 1 0 0.010 0zM10.800 12.900a2.600 2.600 0 1 1-0.010 0z" fill="#54a4d6"/><circle cx="15.700" cy="10.900" r="2.800" fill="#54a4d6"/></svg>
<div class="a g" style="left:322px;top:1076px;"><span style="color:#c6cad2;">sudo.lua</span></div>
<svg class=a style="left:290px;top:1111px;" width="24" height="35" viewBox="0 0 24 35"><path fill-rule="evenodd" d="M8 11.100a8.100 8.100 0 1 0 0.010 0zM10.800 12.900a2.600 2.600 0 1 1-0.010 0z" fill="#54a4d6"/><circle cx="15.700" cy="10.900" r="2.800" fill="#54a4d6"/></svg>
<div class="a g" style="left:322px;top:1111px;"><span style="color:#c6cad2;">telescope.lua</span></div>
<svg class=a style="left:290px;top:1146px;" width="24" height="35" viewBox="0 0 24 35"><path fill-rule="evenodd" d="M8 11.100a8.100 8.100 0 1 0 0.010 0zM10.800 12.900a2.600 2.600 0 1 1-0.010 0z" fill="#54a4d6"/><circle cx="15.700" cy="10.900" r="2.800" fill="#54a4d6"/></svg>
<div class="a g" style="left:322px;top:1146px;"><span style="color:#c6cad2;">terminal.lua</span></div>
<svg class=a style="left:290px;top:1181px;" width="24" height="35" viewBox="0 0 24 35"><path fill-rule="evenodd" d="M8 11.100a8.100 8.100 0 1 0 0.010 0zM10.800 12.900a2.600 2.600 0 1 1-0.010 0z" fill="#54a4d6"/><circle cx="15.700" cy="10.900" r="2.800" fill="#54a4d6"/></svg>
<div class="a g" style="left:322px;top:1181px;"><span style="color:#c6cad2;">undo.lua</span></div>
<svg class=a style="left:258px;top:1216px;" width="24" height="35" viewBox="0 0 24 35"><path d="M0 10.300q0-.800.800-.800h5.700l2.300 2.500h8.900q.800 0 .800.800v11.800q0 .800-.800.800H.800q-.800 0-.800-.800z" fill="#8ba6cb"/></svg>
<div class="a g" style="left:290px;top:1216px;"><span style="color:#86a4cd;">exact_disabled</span></div>
<svg class=a style="left:258px;top:1251px;" width="24" height="35" viewBox="0 0 24 35"><path d="M0 10.300q0-.800.800-.800h5.700l2.300 2.500h8.900q.800 0 .800.800v11.800q0 .800-.800.800H.800q-.800 0-.800-.800z" fill="#8ba6cb"/></svg>
<div class="a g" style="left:290px;top:1251px;"><span style="color:#86a4cd;">exact_editor</span></div>
<svg class=a style="left:258px;top:1286px;" width="24" height="35" viewBox="0 0 24 35"><path d="M0 10.300q0-.800.800-.800h5.700l2.300 2.500h8.900q.800 0 .800.800v11.800q0 .800-.800.800H.800q-.800 0-.800-.800z" fill="#8ba6cb"/></svg>
<div class="a g" style="left:290px;top:1286px;"><span style="color:#86a4cd;">exact_themes</span></div>
<svg class=a style="left:258px;top:1321px;" width="24" height="35" viewBox="0 0 24 35"><path d="M0 10.300q0-.800.800-.800h5.700l2.300 2.500h8.900q.800 0 .800.800v11.800q0 .800-.800.800H.800q-.800 0-.800-.800z" fill="#8ba6cb"/></svg>
<div class="a g" style="left:290px;top:1321px;"><span style="color:#86a4cd;">exact_ui</span></div>
<svg class=a style="left:258px;top:1356px;" width="24" height="35" viewBox="0 0 24 35"><path fill-rule="evenodd" d="M8 11.100a8.100 8.100 0 1 0 0.010 0zM10.800 12.900a2.600 2.600 0 1 1-0.010 0z" fill="#54a4d6"/><circle cx="15.700" cy="10.900" r="2.800" fill="#54a4d6"/></svg>
<div class="a g" style="left:290px;top:1356px;"><span style="color:#c6cad2;">example.lua</span></div>
<svg class=a style="left:258px;top:1391px;" width="24" height="35" viewBox="0 0 24 35"><path fill-rule="evenodd" d="M8 11.100a8.100 8.100 0 1 0 0.010 0zM10.800 12.900a2.600 2.600 0 1 1-0.010 0z" fill="#54a4d6"/><circle cx="15.700" cy="10.900" r="2.800" fill="#54a4d6"/></svg>
<div class="a g" style="left:290px;top:1391px;"><span style="color:#c6cad2;">lsp.lua</span></div>
<svg class=a style="left:226px;top:1426px;" width="24" height="35" viewBox="0 0 24 35"><path d="M0 10.300q0-.800.800-.800h5.700l2.300 2.500h8.900q.800 0 .800.800v11.800q0 .800-.800.800H.800q-.800 0-.800-.800z" fill="#8ba6cb"/></svg>
<div class="a g" style="left:258px;top:1426px;"><span style="color:#86a4cd;">exact_tools</span></div>
<svg class=a style="left:226px;top:1461px;" width="24" height="35" viewBox="0 0 24 35"><path d="M0 10.300q0-.800.800-.800h5.700l2.300 2.500h8.900q.800 0 .800.800v11.800q0 .800-.800.800H.800q-.800 0-.800-.800z" fill="#8ba6cb"/></svg>
<div class="a g" style="left:258px;top:1461px;"><span style="color:#86a4cd;">lsp</span></div>
<svg class=a style="left:226px;top:1496px;" width="24" height="35" viewBox="0 0 24 35"><path fill-rule="evenodd" d="M8 11.100a8.100 8.100 0 1 0 0.010 0zM10.800 12.900a2.600 2.600 0 1 1-0.010 0z" fill="#54a4d6"/><circle cx="15.700" cy="10.900" r="2.800" fill="#54a4d6"/></svg>
<div class="a g" style="left:258px;top:1496px;"><span style="color:#c6cad2;">init.lua</span></div>
<svg class=a style="left:193px;top:1531px;" width="24" height="35" viewBox="0 0 24 35"><path d="M2 9q0-1.500 1.500-1.500h15Q20 7.500 20 9v18q0 1.500-1.500 1.500h-15Q2 28.500 2 27z" fill="#eceff4"/><path d="M5 7.500h5V15l-2.500-2L5 15z" fill="#232730"/></svg>
<div class="a g" style="left:226px;top:1531px;"><span style="color:#c6cad2;">Readme.md</span></div>
<svg class=a style="left:193px;top:1566px;" width="24" height="35" viewBox="0 0 24 35"><path d="M1 10h8v2.500H7.500l1.500 9L17 10h4.500L10 27H5.500L3 12.500H1z" fill="#14a53c"/></svg>
<div class="a g" style="left:226px;top:1566px;"><span style="color:#c6cad2;">init.vim</span></div>
<svg class=a style="left:162px;top:1601px;" width="24" height="35" viewBox="0 0 24 35"><path d="M0 10.300q0-.800.800-.800h5.700l2.300 2.500h8.900q.800 0 .800.800v11.800q0 .800-.800.800H.800q-.800 0-.800-.800z" fill="#8ba6cb"/></svg>
<div class="a g" style="left:194px;top:1601px;"><span style="color:#86a4cd;">ranger</span></div>
<svg class=a style="left:162px;top:1636px;" width="24" height="35" viewBox="0 0 24 35"><path d="M0 10.300q0-.800.800-.800h5.700l2.300 2.500h8.900q.800 0 .800.800v11.800q0 .800-.800.800H.800q-.800 0-.800-.800z" fill="#8ba6cb"/></svg>
<div class="a g" style="left:194px;top:1636px;"><span style="color:#86a4cd;">tmux<b class=h>-</b>powerline</span></div>
<svg class=a style="left:162px;top:1671px;" width="24" height="35" viewBox="0 0 24 35"><path d="M0 10.300q0-.800.800-.800h5.700l2.300 2.500h8.900q.800 0 .800.800v11.800q0 .800-.800.800H.800q-.800 0-.800-.800z" fill="#8ba6cb"/></svg>
<div class="a g" style="left:194px;top:1671px;"><span style="color:#86a4cd;">ueberzugpp</span></div>
<svg class=a style="left:162px;top:1706px;" width="24" height="35" viewBox="0 0 24 35"><path d="M0 10.300q0-.800.800-.800h5.700l2.300 2.500h8.900q.800 0 .800.800v11.800q0 .800-.800.800H.800q-.800 0-.800-.800z" fill="#8ba6cb"/></svg>
<div class="a g" style="left:194px;top:1706px;"><span style="color:#86a4cd;">zellij</span></div>
<div class="a g" style="left:162px;top:1741px;"><span style="color:#9aa6bd;">*</span></div>
<div class="a g" style="left:194px;top:1741px;"><span style="color:#c6cad2;">private_konsolerc</span></div>
<svg class=a style="left:130px;top:1776px;" width="24" height="35" viewBox="0 0 24 35"><path d="M0 10.300q0-.800.800-.800h5.700l2.300 2.500h8.900q.800 0 .800.800v11.800q0 .800-.800.800H.800q-.800 0-.800-.800z" fill="#8ba6cb"/></svg>
<div class="a g" style="left:162px;top:1776px;"><span style="color:#86a4cd;">dot_continue</span></div>
<i class=a style="left:66px;top:1811px;width:640px;height:35px;background:#2b303b;"></i>
<i class=a style="left:66px;top:1811px;width:384px;height:35px;background:#2e3440;"></i>
<svg class=a style="left:450px;top:1811px;" width="16" height="35" viewBox="0 0 16 35"><path d="M0 0l14 17.500L0 35z" fill="#2e3440"/></svg>
<div class="a g" style="left:82px;top:1811px;"><span style="color:#9096a3;font-weight:bold;">~/.local/share/chezmoi</span></div>
<svg class=a style="left:785px;top:201px;" width="22" height="35" viewBox="0 0 22 35"><g transform="translate(10 18)"><circle r="6" fill="none" stroke="#6d7f9f" stroke-width="4.400"/><circle r="8.500" fill="none" stroke="#6d7f9f" stroke-width="3.400" stroke-dasharray="3.340 3.340"/></g></svg>
<div class="a g" style="left:818px;top:201px;"><span style="color:#6f7d99;">dot_tmux.conf</span></div>
<svg class=a style="left:1090px;top:201px;" width="20" height="35" viewBox="0 0 20 35"><path d="M2.500 10.500l12 13M14.500 10.500l-12 13" stroke="#7f8aa3" stroke-width="3.200"/></svg>
<i class=a style="left:1122px;top:201px;width:400px;height:35px;background:#7c8392;"></i>
<i class=a style="left:1122px;top:201px;width:4px;height:35px;background:#81a1c1;"></i>
<i class=a style="left:1522px;top:201px;width:5px;height:35px;background:#6d7484;"></i>
<svg class=a style="left:1202px;top:201px;" width="24" height="35" viewBox="0 0 24 35"><path fill-rule="evenodd" d="M8 11.100a8.100 8.100 0 1 0 0.010 0zM10.800 12.900a2.600 2.600 0 1 1-0.010 0z" fill="#5aa6d6"/><circle cx="15.700" cy="10.900" r="2.800" fill="#5aa6d6"/></svg>
<div class="a g" style="left:1234px;top:201px;"><span style="color:#eceff4;">neo<b class=h>-</b>tree.lua</span></div>
<svg class=a style="left:1490px;top:201px;" width="20" height="35" viewBox="0 0 20 35"><path d="M2.500 10.500l12 13M14.500 10.500l-12 13" stroke="#f2f4f8" stroke-width="3.400"/></svg>
<i class=a style="left:2098px;top:236px;width:16px;height:1120px;background:#3b4252;"></i>
<i class=a style="left:834px;top:691px;width:1680px;height:35px;background:#434c5e;"></i>
<i class=a style="left:2098px;top:691px;width:16px;height:35px;background:#3b4252;"></i>
<i class=a style="left:2498px;top:236px;width:16px;height:70px;background:#3f495b;"></i>
<i class=a style="left:2485px;top:286px;width:11px;height:10px;background:#ebcb8b;"></i>
<i class=a style="left:834px;top:236px;width:4px;height:1120px;background:#434c5e;"></i>
<i class=a style="left:866px;top:271px;width:4px;height:1085px;background:#434c5e;"></i>
<i class=a style="left:898px;top:376px;width:4px;height:840px;background:#434c5e;"></i>
<i class=a style="left:898px;top:1251px;width:4px;height:105px;background:#434c5e;"></i>
<i class=a style="left:930px;top:551px;width:4px;height:630px;background:#434c5e;"></i>
<i class=a style="left:930px;top:1286px;width:4px;height:70px;background:#434c5e;"></i>
<i class=a style="left:994px;top:691px;width:4px;height:385px;background:#434c5e;"></i>
<i class=a style="left:1026px;top:726px;width:4px;height:350px;background:#434c5e;"></i>
<i class=a style="left:1058px;top:866px;width:4px;height:175px;background:#434c5e;"></i>
<i class=a style="left:962px;top:656px;width:4px;height:455px;background:#ebcb8b;"></i>
<svg class=a style="left:802px;top:236px;" width="20" height="35" viewBox="0 0 20 35"><path d="M1.800 13.500l7.400 7.800 7.400-7.800" fill="none" stroke="#7b818c" stroke-width="3.400"/></svg>
<svg class=a style="left:802px;top:341px;" width="20" height="35" viewBox="0 0 20 35"><path d="M1.800 13.500l7.400 7.800 7.400-7.800" fill="none" stroke="#7b818c" stroke-width="3.400"/></svg>
<svg class=a style="left:802px;top:516px;" width="20" height="35" viewBox="0 0 20 35"><path d="M1.800 13.500l7.400 7.800 7.400-7.800" fill="none" stroke="#7b818c" stroke-width="3.400"/></svg>
<svg class=a style="left:802px;top:621px;" width="20" height="35" viewBox="0 0 20 35"><path d="M1.800 13.500l7.400 7.800 7.400-7.800" fill="none" stroke="#7b818c" stroke-width="3.400"/></svg>
<svg class=a style="left:802px;top:656px;" width="20" height="35" viewBox="0 0 20 35"><path d="M1.800 13.500l7.400 7.800 7.400-7.800" fill="none" stroke="#7b818c" stroke-width="3.400"/></svg>
<svg class=a style="left:802px;top:691px;" width="20" height="35" viewBox="0 0 20 35"><path d="M1.800 13.500l7.400 7.800 7.400-7.800" fill="none" stroke="#7b818c" stroke-width="3.400"/></svg>
<svg class=a style="left:802px;top:831px;" width="20" height="35" viewBox="0 0 20 35"><path d="M1.800 13.500l7.400 7.800 7.400-7.800" fill="none" stroke="#7b818c" stroke-width="3.400"/></svg>
<svg class=a style="left:802px;top:1216px;" width="20" height="35" viewBox="0 0 20 35"><path d="M1.800 13.500l7.400 7.800 7.400-7.800" fill="none" stroke="#7b818c" stroke-width="3.400"/></svg>
<svg class=a style="left:802px;top:1251px;" width="20" height="35" viewBox="0 0 20 35"><path d="M1.800 13.500l7.400 7.800 7.400-7.800" fill="none" stroke="#7b818c" stroke-width="3.400"/></svg>
<div class="a g" style="left:738px;top:236px;"><span style="color:#6e7683;">16</span></div>
<div class="a g" style="left:738px;top:271px;"><span style="color:#6e7683;">17</span></div>
<div class="a g" style="left:738px;top:306px;"><span style="color:#6e7683;">18</span></div>
<div class="a g" style="left:738px;top:341px;"><span style="color:#6e7683;">19</span></div>
<div class="a g" style="left:738px;top:376px;"><span style="color:#6e7683;">20</span></div>
<div class="a g" style="left:738px;top:411px;"><span style="color:#6e7683;">21</span></div>
<div class="a g" style="left:738px;top:446px;"><span style="color:#6e7683;">22</span></div>
<div class="a g" style="left:738px;top:481px;"><span style="color:#6e7683;">23</span></div>
<div class="a g" style="left:738px;top:516px;"><span style="color:#6e7683;">24</span></div>
<div class="a g" style="left:738px;top:551px;"><span style="color:#6e7683;">25</span></div>
<div class="a g" style="left:738px;top:586px;"><span style="color:#6e7683;">26</span></div>
<div class="a g" style="left:738px;top:621px;"><span style="color:#6e7683;">27</span></div>
<div class="a g" style="left:738px;top:656px;"><span style="color:#6e7683;">28</span></div>
<div class="a g" style="left:738px;top:691px;"><span style="color:#ebcb8b;font-weight:bold;">29</span></div>
<div class="a g" style="left:738px;top:726px;"><span style="color:#6e7683;">30</span></div>
<div class="a g" style="left:738px;top:761px;"><span style="color:#6e7683;">31</span></div>
<div class="a g" style="left:738px;top:796px;"><span style="color:#6e7683;">32</span></div>
<div class="a g" style="left:738px;top:831px;"><span style="color:#6e7683;">33</span></div>
<div class="a g" style="left:738px;top:866px;"><span style="color:#6e7683;">34</span></div>
<div class="a g" style="left:738px;top:901px;"><span style="color:#6e7683;">35</span></div>
<div class="a g" style="left:738px;top:936px;"><span style="color:#6e7683;">36</span></div>
<div class="a g" style="left:738px;top:971px;"><span style="color:#6e7683;">37</span></div>
<div class="a g" style="left:738px;top:1006px;"><span style="color:#6e7683;">38</span></div>
<div class="a g" style="left:738px;top:1041px;"><span style="color:#6e7683;">39</span></div>
<div class="a g" style="left:738px;top:1076px;"><span style="color:#6e7683;">40</span></div>
<div class="a g" style="left:738px;top:1111px;"><span style="color:#6e7683;">41</span></div>
<div class="a g" style="left:738px;top:1146px;"><span style="color:#6e7683;">42</span></div>
<div class="a g" style="left:738px;top:1181px;"><span style="color:#6e7683;">43</span></div>
<div class="a g" style="left:738px;top:1216px;"><span style="color:#6e7683;">44</span></div>
<div class="a g" style="left:738px;top:1251px;"><span style="color:#6e7683;">45</span></div>
<div class="a g" style="left:738px;top:1286px;"><span style="color:#6e7683;">46</span></div>
<div class="a g" style="left:738px;top:1321px;"><span style="color:#6e7683;">47</span></div>
<div class="a g" style="left:866px;top:236px;"><span style="color:#d8dee9;">{</span></div>
<div class="a g" style="left:898px;top:271px;"><span style="color:#a3be8c;">"nvim<b class=h>-</b>neo<b class=h>-</b>tree/neo<b class=h>-</b>tree.nvim"</span><span style="color:#d8dee9;">,</span></div>
<div class="a g" style="left:898px;top:306px;"><span style="color:#81a1c1;">branch</span><span style="color:#d8dee9;"> = </span><span style="color:#a3be8c;">"v3.x"</span><span style="color:#d8dee9;">,</span></div>
<div class="a g" style="left:898px;top:341px;"><span style="color:#81a1c1;">dependencies</span><span style="color:#d8dee9;"> = {</span></div>
<div class="a g" style="left:930px;top:376px;"><span style="color:#a3be8c;">"nvim<b class=h>-</b>lua/plenary.nvim"</span><span style="color:#d8dee9;">,</span></div>
<div class="a g" style="left:930px;top:411px;"><span style="color:#a3be8c;">"nvim<b class=h>-</b>tree/nvim<b class=h>-</b>web<b class=h>-</b>devicons"</span><span style="color:#d8dee9;">, </span><span style="color:#616e88;font-style:italic;"><b class=h>-</b><b class=h>-</b> not strictly required, but recommended</span></div>
<div class="a g" style="left:930px;top:446px;"><span style="color:#a3be8c;">"MunifTanjim/nui.nvim"</span><span style="color:#d8dee9;">,</span></div>
<div class="a g" style="left:930px;top:481px;"><span style="color:#616e88;font-style:italic;"><b class=h>-</b><b class=h>-</b> "3rd/image.nvim", <b class=h>-</b><b class=h>-</b> <b class=w>先</b><b class=w>註</b><b class=w>解</b><b class=w>，</b><b class=w>因</b><b class=w>為</b><b class=w>已</b><b class=w>經</b><b class=w>由</b> nvim/lua/plugins/components/image.lua <b class=w>處</b><b class=w>理</b><b class=w>了</b></span></div>
<div class="a g" style="left:930px;top:516px;"><span style="color:#d8dee9;">{</span></div>
<div class="a g" style="left:962px;top:551px;"><span style="color:#a3be8c;">"s1n7ax/nvim<b class=h>-</b>window<b class=h>-</b>picker"</span><span style="color:#d8dee9;">, </span><span style="color:#616e88;font-style:italic;"><b class=h>-</b><b class=h>-</b> for open_with_window_picker keymaps</span></div>
<div class="a g" style="left:962px;top:586px;"><span style="color:#81a1c1;">version</span><span style="color:#d8dee9;"> = </span><span style="color:#a3be8c;">"2.*"</span><span style="color:#d8dee9;">,</span></div>
<div class="a g" style="left:962px;top:621px;"><span style="color:#81a1c1;text-decoration:underline;text-decoration-color:#ebcb8b;text-underline-offset:2px;text-decoration-thickness:1.500px;">config</span><span style="color:#d8dee9;text-decoration:underline;text-decoration-color:#ebcb8b;text-underline-offset:2px;text-decoration-thickness:1.500px;"> = </span><span style="color:#b48ead;text-decoration:underline;text-decoration-color:#ebcb8b;text-underline-offset:2px;text-decoration-thickness:1.500px;">function</span><span style="color:#d8dee9;text-decoration:underline;text-decoration-color:#ebcb8b;text-underline-offset:2px;text-decoration-thickness:1.500px;">()</span></div>
<div class="a g" style="left:994px;top:656px;"><span style="color:#bf616a;">require</span><span style="color:#d8dee9;">(</span><span style="color:#a3be8c;">"window<b class=h>-</b>picker"</span><span style="color:#d8dee9;">).</span><span style="color:#88c0d0;">setup</span><span style="color:#d8dee9;">({</span></div>
<div class="a g" style="left:1026px;top:691px;"><span style="color:#81a1c1;">filter_rules</span><span style="color:#d8dee9;"> = </span></div>
<div class="a g" style="left:1058px;top:726px;"><span style="color:#d8dee9;">include_current_win = </span><span style="color:#d08770;">false</span><span style="color:#d8dee9;">,</span></div>
<div class="a g" style="left:1058px;top:761px;"><span style="color:#81a1c1;">autoselect_one</span><span style="color:#d8dee9;"> = </span><span style="color:#d08770;">true</span><span style="color:#d8dee9;">,</span></div>
<div class="a g" style="left:1058px;top:796px;"><span style="color:#616e88;font-style:italic;"><b class=h>-</b><b class=h>-</b> filter using buffer options</span></div>
<div class="a g" style="left:1058px;top:831px;"><span style="color:#81a1c1;">bo</span><span style="color:#d8dee9;"> = {</span></div>
<div class="a g" style="left:1090px;top:866px;"><span style="color:#616e88;font-style:italic;"><b class=h>-</b><b class=h>-</b> if the file type is one of following, the window will be ignored</span></div>
<div class="a g" style="left:994px;top:1076px;"><span style="color:#d8dee9;">})</span></div>
<div class="a g" style="left:962px;top:1111px;"><span style="color:#b48ead;">end</span><span style="color:#d8dee9;">,</span></div>
<div class="a g" style="left:930px;top:1146px;"><span style="color:#d8dee9;">},</span></div>
<div class="a g" style="left:898px;top:1181px;"><span style="color:#d8dee9;">},</span></div>
<div class="a g" style="left:898px;top:1216px;"><span style="color:#81a1c1;">keys</span><span style="color:#d8dee9;"> = {</span></div>
<div class="a g" style="left:930px;top:1251px;"><span style="color:#d8dee9;">{ </span><span style="color:#a3be8c;">"&lt;F9&gt;"</span></div>
<div class="a g" style="left:994px;top:1286px;"><span style="color:#d8dee9;">vim</span></div>
<div class="a g" style="left:994px;top:1321px;"><span style="color:#d8dee9;">vim</span></div>
<i class=a style="left:1266px;top:692px;width:16px;height:33px;background:#434c5e;box-shadow:inset 0 0 0 2px #ebcb8b"></i>
<div class="a g" style="left:1266px;top:691px;"><span style="color:#ebcb8b;">{</span></div>
<div class="a g" style="left:2482px;top:866px;"><span style="color:#4c5a78;">Λ↰</span></div>
<i class=a style="left:722px;top:1356px;width:1792px;height:35px;background:#3b4252;"></i>
<i class=a style="left:722px;top:1356px;width:128px;height:35px;background:#9ec57d;"></i>
<svg class=a style="left:850px;top:1356px;" width="16" height="35" viewBox="0 0 16 35"><path d="M0 0l16 17.500L0 35z" fill="#9ec57d"/></svg>
<div class="a g" style="left:738px;top:1356px;"><span style="color:#2e3440;font-weight:bold;">NORMAL</span></div>
<svg class=a style="left:882px;top:1356px;" width="22" height="35" viewBox="0 0 22 35"><path d="M3.500 1v18" stroke="#a9afbf" stroke-width="3.200" fill="none"/><path d="M3.500 35V27q0-4 4-6.500t4-6.500V7" stroke="#a9afbf" stroke-width="3.200" fill="none"/><path d="M6.500 11.500l5-6 5 6" stroke="#a9afbf" stroke-width="2.600" fill="none"/></svg>
<div class="a g" style="left:914px;top:1356px;"><span style="color:#a3a9b8;">master</span></div>
<i class=a style="left:722px;top:1391px;width:1792px;height:420px;background:#20232c;"></i>
<svg class=a style="left:817px;top:1391px;" width="22" height="35" viewBox="0 0 22 35"><path d="M2 7 h9l6 6v15H2z" fill="#e5e9f0"/><path d="M11 7 v6h6z" fill="#9aa0ac"/></svg>
<div class="a g" style="left:866px;top:1391px;"><span style="color:#d8dee9;">dot_bashrc.tmpl</span></div>
<svg class=a style="left:817px;top:1426px;" width="24" height="35" viewBox="0 0 24 35"><path d="M1.500 25V11h6l2.500 3h7.500v3M1.500 25l4-8h15.500l-4 8z" fill="none" stroke="#81a1c1" stroke-width="1.700"/></svg>
<div class="a g" style="left:866px;top:1426px;"><span style="color:#81a1c1;">dot_config/</span></div>
<svg class=a style="left:817px;top:1461px;" width="24" height="35" viewBox="0 0 24 35"><path d="M1.500 25V11h6l2.500 3h7.500v3M1.500 25l4-8h15.500l-4 8z" fill="none" stroke="#81a1c1" stroke-width="1.700"/></svg>
<div class="a g" style="left:866px;top:1461px;"><span style="color:#81a1c1;">dot_continue/</span></div>
<i class=a style="left:1550px;top:1531px;width:308px;height:35px;background:#a3be8c;"></i>
<svg class=a style="left:1858px;top:1531px;" width="16" height="34" viewBox="0 0 16 34"><path d="M0 0l16 17L0 34z" fill="#a3be8c"/></svg>
<div class="a g" style="left:1584px;top:1531px;font-size:16px;letter-spacing:-1px;font-family:'DejaVu Sans',sans-serif"><span style="color:#505a74;font-weight:bold;">git</span></div>
<svg class=a style="left:1617px;top:1531px;" width="22" height="34" viewBox="0 0 22 34"><circle cx="5" cy="8" r="2.600" fill="none" stroke="#505a74" stroke-width="2"/><circle cx="16" cy="10" r="2.600" fill="none" stroke="#505a74" stroke-width="2"/><circle cx="5" cy="27" r="2.600" fill="none" stroke="#505a74" stroke-width="2"/><path d="M5 10.500v14M16 12.500q0 7-11 9" fill="none" stroke="#505a74" stroke-width="2"/></svg>
<div class="a g" style="left:1650px;top:1531px;"><span style="color:#505a74;">master </span><span style="color:#505a74;">↑</span><span style="color:#505a74;">1 *1</span></div>
<i class=a style="left:1118px;top:1531px;width:452px;height:35px;background:#81a1c1;border-radius:0 17px 17px 0"></i>
<svg class=a style="left:1154px;top:1531px;" width="26" height="34" viewBox="0 0 26 34"><path d="M0 11.300q0-.800.800-.800h5.200l2.300 2.300h6q.800 0 .800.800v1.200H4.200q-.900 0-1.200.800L0 22z" fill="#e5e9f0"/><path d="M4.600 16.300h14l-3 6.500q-.300.700-1 .700H.300z" fill="#e5e9f0"/></svg>
<div class="a g" style="left:1186px;top:1531px;"><span style="color:#e8ecf2;">~/</span><span style="color:#e8ecf2;font-weight:bold;">.local</span><span style="color:#e8ecf2;">/</span><span style="color:#e8ecf2;font-weight:bold;">share</span><span style="color:#e8ecf2;">/</span><span style="color:#e8ecf2;font-weight:bold;">chezmoi</span></div>
<i class=a style="left:782px;top:1531px;width:356px;height:35px;background:#3f4659;border-radius:0 17px 17px 0"></i>
<div class="a g" style="left:818px;top:1531px;"><span style="color:#ebcb8b;">yuan@Yuan<b class=h>-</b>XPS<b class=h>-</b>9500</span></div>
<i class=a style="left:738px;top:1531px;width:64px;height:35px;background:#d8dee9;border-radius:0 17px 17px 0"></i>
<svg class=a style="left:752px;top:1531px;" width="22" height="34" viewBox="0 0 22 34"><path d="M0.600 7.500h12.200v6H6.200v13H0.600zM7 14.300h5.800v12.200H7zM13.800 7.500H20v19h-6.200z" fill="#0b0c10"/></svg>
<div class="a g" style="left:1890px;top:1531px;"><span style="color:#a3be8c;">git s</span></div>
<svg class=a style="left:2034px;top:1531px;" width="16" height="34" viewBox="0 0 16 34"><path d="M16 0L0 17l16 17z" fill="#3f4659"/></svg>
<i class=a style="left:2050px;top:1531px;width:68px;height:35px;background:#3f4659;"></i>
<div class="a g" style="left:2066px;top:1531px;font-size:22px"><span style="color:#a3be8c;">✔</span></div>
<i class=a style="left:2098px;top:1531px;width:212px;height:35px;background:#a3be8c;border-radius:17px 0 0 17px"></i>
<div class="a g" style="left:2130px;top:1531px;"><span style="color:#e5e9f0;">23.11.1</span></div>
<svg class=a style="left:2258px;top:1531px;" width="22" height="34" viewBox="0 0 22 34"><path d="M10.300 6.800l9.300 8v11.500h-6.300v-8.500h-6v8.500H1V14.800z" fill="#e5e9f0"/></svg>
<i class=a style="left:2290px;top:1531px;width:208px;height:35px;background:#d8dee9;border-radius:17px 0 0 17px"></i>
<div class="a g" style="left:2322px;top:1531px;"><span style="color:#505a74;">12:55:31</span></div>
<svg class=a style="left:2466px;top:1531px;" width="20" height="34" viewBox="0 0 20 34"><circle cx="9" cy="17" r="8" fill="none" stroke="#505a74" stroke-width="2.200"/><path d="M9 11.500v6h4.500" fill="none" stroke="#505a74" stroke-width="2"/></svg>
<i class=a style="left:1550px;top:1776px;width:308px;height:35px;background:#a3be8c;"></i>
<svg class=a style="left:1858px;top:1776px;" width="16" height="34" viewBox="0 0 16 34"><path d="M0 0l16 17L0 34z" fill="#a3be8c"/></svg>
<div class="a g" style="left:1584px;top:1776px;font-size:16px;letter-spacing:-1px;font-family:'DejaVu Sans',sans-serif"><span style="color:#505a74;font-weight:bold;">git</span></div>
<svg class=a style="left:1617px;top:1776px;" width="22" height="34" viewBox="0 0 22 34"><circle cx="5" cy="8" r="2.600" fill="none" stroke="#505a74" stroke-width="2"/><circle cx="16" cy="10" r="2.600" fill="none" stroke="#505a74" stroke-width="2"/><circle cx="5" cy="27" r="2.600" fill="none" stroke="#505a74" stroke-width="2"/><path d="M5 10.500v14M16 12.500q0 7-11 9" fill="none" stroke="#505a74" stroke-width="2"/></svg>
<div class="a g" style="left:1650px;top:1776px;"><span style="color:#505a74;">master </span><span style="color:#505a74;">↑</span><span style="color:#505a74;">1 *1</span></div>
<i class=a style="left:1118px;top:1776px;width:452px;height:35px;background:#81a1c1;border-radius:0 17px 17px 0"></i>
<svg class=a style="left:1154px;top:1776px;" width="26" height="34" viewBox="0 0 26 34"><path d="M0 11.300q0-.800.800-.800h5.200l2.300 2.300h6q.800 0 .800.800v1.200H4.200q-.900 0-1.200.800L0 22z" fill="#e5e9f0"/><path d="M4.600 16.300h14l-3 6.500q-.300.700-1 .700H.300z" fill="#e5e9f0"/></svg>
<div class="a g" style="left:1186px;top:1776px;"><span style="color:#e8ecf2;">~/</span><span style="color:#e8ecf2;font-weight:bold;">.local</span><span style="color:#e8ecf2;">/</span><span style="color:#e8ecf2;font-weight:bold;">share</span><span style="color:#e8ecf2;">/</span><span style="color:#e8ecf2;font-weight:bold;">chezmoi</span></div>
<i class=a style="left:782px;top:1776px;width:356px;height:35px;background:#3f4659;border-radius:0 17px 17px 0"></i>
<div class="a g" style="left:818px;top:1776px;"><span style="color:#ebcb8b;">yuan@Yuan<b class=h>-</b>XPS<b class=h>-</b>9500</span></div>
<i class=a style="left:738px;top:1776px;width:64px;height:35px;background:#d8dee9;border-radius:0 17px 17px 0"></i>
<svg class=a style="left:752px;top:1776px;" width="22" height="34" viewBox="0 0 22 34"><path d="M0.600 7.500h12.200v6H6.200v13H0.600zM7 14.300h5.800v12.200H7zM13.800 7.500H20v19h-6.200z" fill="#0b0c10"/></svg>
<svg class=a style="left:2034px;top:1776px;" width="16" height="34" viewBox="0 0 16 34"><path d="M16 0L0 17l16 17z" fill="#3f4659"/></svg>
<i class=a style="left:2050px;top:1776px;width:68px;height:35px;background:#3f4659;"></i>
<div class="a g" style="left:2066px;top:1776px;font-size:22px"><span style="color:#a3be8c;">✔</span></div>
<i class=a style="left:2098px;top:1776px;width:212px;height:35px;background:#a3be8c;border-radius:17px 0 0 17px"></i>
<div class="a g" style="left:2130px;top:1776px;"><span style="color:#e5e9f0;">23.11.1</span></div>
<svg class=a style="left:2258px;top:1776px;" width="22" height="34" viewBox="0 0 22 34"><path d="M10.300 6.800l9.300 8v11.500h-6.300v-8.500h-6v8.500H1V14.800z" fill="#e5e9f0"/></svg>
<i class=a style="left:2290px;top:1776px;width:208px;height:35px;background:#d8dee9;border-radius:17px 0 0 17px"></i>
<div class="a g" style="left:2322px;top:1776px;"><span style="color:#505a74;">12:55:32</span></div>
<svg class=a style="left:2466px;top:1776px;" width="20" height="34" viewBox="0 0 20 34"><circle cx="9" cy="17" r="8" fill="none" stroke="#505a74" stroke-width="2.200"/><path d="M9 11.500v6h4.500" fill="none" stroke="#505a74" stroke-width="2"/></svg>
<i class=a style="left:782px;top:1531px;width:320px;height:35px;background:#3f4659;"></i>
<i class=a style="left:738px;top:1531px;width:64px;height:35px;background:#d8dee9;border-radius:0 17.500px 17.500px 0"></i>
<svg class=a style="left:752px;top:1531px;" width="22" height="35" viewBox="0 0 22 35"><path d="M0.600 8h12.200v6H6.200v13H0.600zM7 14.800h5.800V27H7zM13.800 8H20v19h-6.200z" fill="#0b0c10"/></svg>
<div class="a g" style="left:818px;top:1531px;"><span style="color:#ebcb8b;">yuan@Yuan<b class=h>-</b>XPS<b class=h>-</b>9500</span></div>
<i class=a style="left:782px;top:1776px;width:320px;height:35px;background:#3f4659;"></i>
<i class=a style="left:738px;top:1776px;width:64px;height:35px;background:#d8dee9;border-radius:0 17.500px 17.500px 0"></i>
<svg class=a style="left:752px;top:1776px;" width="22" height="35" viewBox="0 0 22 35"><path d="M0.600 8h12.200v6H6.200v13H0.600zM7 14.800h5.800V27H7zM13.800 8H20v19h-6.200z" fill="#0b0c10"/></svg>
<div class="a g" style="left:818px;top:1776px;"><span style="color:#ebcb8b;">yuan@Yuan<b class=h>-</b>XPS<b class=h>-</b>9500</span></div>
<svg class=a style="left:1313px;top:1391px;" width="24" height="35" viewBox="0 0 24 35"><path d="M2 7 h9l6 6v15H2z" fill="#e5e9f0"/><path d="M11 7 v6h6z" fill="#9aa0ac"/></svg>
<div class="a g" style="left:1362px;top:1391px;"><span style="color:#d8dee9;">dot_gvimrc</span></div>
<svg class=a style="left:1777px;top:1391px;" width="24" height="35" viewBox="0 0 24 35"><path d="M2 7 h9l6 6v15H2z" fill="#e5e9f0"/><path d="M11 7 v6h6z" fill="#9aa0ac"/></svg>
<div class="a g" style="left:1826px;top:1391px;"><span style="color:#d8dee9;">dot_zshrc.tmpl</span></div>
<svg class=a style="left:1313px;top:1426px;" width="24" height="35" viewBox="0 0 24 35"><path d="M1.500 25V11h6l2.500 3h7.500v3M1.500 25l4-8h15.500l-4 8z" fill="none" stroke="#81a1c1" stroke-width="1.700"/></svg>
<div class="a g" style="left:1362px;top:1426px;"><span style="color:#81a1c1;">dot_local/</span></div>
<svg class=a style="left:1777px;top:1426px;" width="24" height="35" viewBox="0 0 24 35"><path d="M2 7 h9l6 6v15H2z" fill="#e5e9f0"/><path d="M11 7 v6h6z" fill="#9aa0ac"/></svg>
<div class="a g" style="left:1826px;top:1426px;"><span style="color:#d8dee9;">Readme.md</span></div>
<svg class=a style="left:1313px;top:1461px;" width="24" height="35" viewBox="0 0 24 35"><path d="M2 7 h9l6 6v15H2z" fill="#e5e9f0"/><path d="M11 7 v6h6z" fill="#9aa0ac"/></svg>
<div class="a g" style="left:1362px;top:1461px;"><span style="color:#d8dee9;">dot_p10k.zsh.tmpl</span></div>
<div class="a g" style="left:1762px;top:1356px;"><span style="color:#a3a9b8;">rw<b class=h>-</b>r<b class=h>-</b><b class=h>-</b>r<b class=h>-</b><b class=h>-</b>   utf<b class=h>-</b>8 <b class=w>〈</b>  <b class=w>〈</b>   lua</span></div>
<i class=a style="left:2370px;top:1356px;width:144px;height:35px;background:#9ec57d;"></i>
<div class="a g" style="left:2306px;top:1356px;"><span style="color:#a3a9b8;"> 5%  </span><span style="color:#2e3440;font-weight:bold;">29:28</span></div>
<div class="a g" style="left:738px;top:1566px;"><span style="color:#d8dee9;"><b class=w>位</b><b class=w>於</b><b class=w>分</b><b class=w>支</b> master</span></div>
<div class="a g" style="left:738px;top:1601px;"><span style="color:#d8dee9;"><b class=w>您</b><b class=w>的</b><b class=w>分</b><b class=w>支</b><b class=w>領</b><b class=w>先</b> 'origin/master' <b class=w>共</b> 1 <b class=w>個</b><b class=w>提</b><b class=w>交</b><b class=w>。</b></span></div>
<div class="a g" style="left:738px;top:1636px;"><span style="color:#d8dee9;">  <b class=w>（</b><b class=w>使</b><b class=w>用</b> "git push" <b class=w>來</b><b class=w>發</b><b class=w>布</b><b class=w>您</b><b class=w>的</b><b class=w>本</b><b class=w>機</b><b class=w>提</b><b class=w>交</b><b class=w>）</b></span></div>
<div class="a g" style="left:738px;top:1706px;"><span style="color:#d8dee9;"><b class=w>沒</b><b class=w>有</b><b class=w>要</b><b class=w>提</b><b class=w>交</b><b class=w>的</b><b class=w>檔</b><b class=w>案</b><b class=w>，</b><b class=w>工</b><b class=w>作</b><b class=w>區</b><b class=w>為</b><b class=w>乾</b><b class=w>淨</b><b class=w>狀</b><b class=w>態</b></span></div>
<i class=a style="left:722px;top:1811px;width:1792px;height:35px;background:#2b303b;"></i>
<i class=a style="left:722px;top:1811px;width:256px;height:35px;background:#2e3440;"></i>
<svg class=a style="left:978px;top:1811px;" width="16" height="35" viewBox="0 0 16 35"><path d="M0 0l14 17.500L0 35z" fill="#2e3440"/></svg>
<div class="a g" style="left:738px;top:1811px;"><span style="color:#9096a3;font-weight:bold;">ToggleTerm #1</span></div>
<i class=a style="left:2514px;top:236px;width:1072px;height:1610px;background:#232730;"></i>
<i class=a style="left:2562px;top:271px;width:1024px;height:1575px;background:#3b4252;"></i>
<i class=a style="left:2962px;top:236px;width:160px;height:35px;background:#a3be8c;border-radius:17.500px"></i>
<svg class=a style="left:2980px;top:236px;" width="26" height="35" viewBox="0 0 26 35"><path d="M12 8q10 0 10 8t-10 8q-2 0-4-.6L3.500 26l1.200-4.500Q2 19.500 2 16q0-8 10-8z" fill="#2e3440"/><circle cx="8" cy="16" r="1.500" fill="#a3be8c"/><circle cx="12" cy="16" r="1.500" fill="#a3be8c"/><circle cx="16" cy="16" r="1.500" fill="#a3be8c"/></svg>
<div class="a g" style="left:3010px;top:236px;"><span style="color:#2e3440;font-weight:bold;">Avante</span></div>
<svg class=a style="left:2530px;top:341px;" width="20" height="35" viewBox="0 0 20 35"><path d="M1.800 13.500l7.400 7.800 7.400-7.800" fill="none" stroke="#7b818c" stroke-width="3.400"/></svg>
<svg class=a style="left:2530px;top:551px;" width="20" height="35" viewBox="0 0 20 35"><path d="M1.800 13.500l7.400 7.800 7.400-7.800" fill="none" stroke="#7b818c" stroke-width="3.400"/></svg>
<div class="a g" style="left:2658px;top:271px;"><span style="color:#d8dee9;">)</span></div>
<div class="a g" style="left:2658px;top:341px;"><span style="color:#b48ead;font-weight:bold;">local</span><span style="color:#e5e9f0;"> esc = vim.</span><span style="color:#81a1c1;">api</span><span style="color:#d8dee9;">.</span><span style="color:#81a1c1;">nvim_replace_termcodes</span><span style="color:#d8dee9;">(</span></div>
<div class="a g" style="left:2722px;top:376px;"><span style="color:#a3be8c;">'&lt;ESC&gt;'</span><span style="color:#d8dee9;">, </span><span style="color:#d08770;">true</span><span style="color:#d8dee9;">, </span><span style="color:#d08770;">false</span><span style="color:#d8dee9;">, </span><span style="color:#d08770;">true</span></div>
<div class="a g" style="left:2658px;top:411px;"><span style="color:#d8dee9;">)</span></div>
<div class="a g" style="left:2658px;top:481px;"><span style="color:#616e88;font-style:italic;"><b class=h>-</b><b class=h>-</b> Toggle selection (linewise)</span></div>
<div class="a g" style="left:2658px;top:516px;"><span style="color:#616e88;font-style:italic;"><b class=h>-</b><b class=h>-</b> vim.keymap.set('x', '&lt;leader&gt;c', function()</span></div>
<div class="a g" style="left:2658px;top:551px;"><span style="color:#e5e9f0;">vim.</span><span style="color:#81a1c1;">keymap</span><span style="color:#d8dee9;">.</span><span style="color:#81a1c1;">set</span><span style="color:#d8dee9;">(</span><span style="color:#a3be8c;">'x'</span><span style="color:#d8dee9;">, </span><span style="color:#a3be8c;">'&lt;C<b class=h>-</b>_&gt;'</span><span style="color:#d8dee9;">, </span><span style="color:#b48ead;">function</span><span style="color:#d8dee9;">()</span></div>
<div class="a g" style="left:2722px;top:586px;"><span style="color:#e5e9f0;">vim.</span><span style="color:#81a1c1;">api</span><span style="color:#d8dee9;">.</span><span style="color:#81a1c1;">nvim_feedkeys</span><span style="color:#d8dee9;">(</span><span style="color:#e5e9f0;">esc</span><span style="color:#d8dee9;">, </span><span style="color:#a3be8c;">'nx'</span><span style="color:#d8dee9;">, </span><span style="color:#d08770;">false</span><span style="color:#d8dee9;">)</span></div>
<div class="a g" style="left:2722px;top:621px;"><span style="color:#e5e9f0;">api.</span><span style="color:#81a1c1;">toggle</span><span style="color:#d8dee9;">.</span><span style="color:#81a1c1;">linewise</span><span style="color:#d8dee9;">(</span><span style="color:#e5e9f0;">vim.</span><span style="color:#81a1c1;">fn</span><span style="color:#d8dee9;">.</span><span style="color:#81a1c1;">visualmode</span><span style="color:#d8dee9;">())</span></div>
<div class="a g" style="left:2658px;top:656px;"><span style="color:#b48ead;">end</span><span style="color:#d8dee9;">)</span></div>
<div class="a g" style="left:2658px;top:726px;"><span style="color:#616e88;font-style:italic;"><b class=h>-</b><b class=h>-</b> <b class=w>新</b><b class=w>增</b><b class=w>的</b><b class=w>映</b><b class=w>射</b></span></div>
<div class="a g" style="left:2658px;top:761px;"><span style="color:#e5e9f0;">vim.</span><span style="color:#81a1c1;">keymap</span><span style="color:#d8dee9;">.</span><span style="color:#81a1c1;">set</span><span style="color:#d8dee9;">(</span><span style="color:#a3be8c;">'n'</span><span style="color:#d8dee9;">, </span><span style="color:#a3be8c;">'&lt;C<b class=h>-</b>/&gt;'</span><span style="color:#d8dee9;">, </span><span style="color:#b48ead;">function</span><span style="color:#d8dee9;">()</span></div>
<div class="a g" style="left:2690px;top:796px;"><span style="color:#bf616a;">require</span><span style="color:#d8dee9;">(</span><span style="color:#a3be8c;">"Comment"</span><span style="color:#d8dee9;">).</span><span style="color:#81a1c1;">toggle</span><span style="color:#d8dee9;">({ </span><span style="color:#81a1c1;">line</span><span style="color:#d8dee9;"> = </span><span style="color:#d08770;">true</span><span style="color:#d8dee9;"> })</span></div>
<div class="a g" style="left:2658px;top:831px;"><span style="color:#b48ead;">end</span><span style="color:#d8dee9;">)</span></div>
<i class=a style="left:1019px;top:892px;width:2794px;height:1476px;background:transparent;border-radius:9px 9px 0 0;box-shadow:0 10px 44px 4px rgba(5,8,20,.55),0 0 0 1.500px rgba(98,103,112,.9)"></i>
<i class=a style="left:1019px;top:892px;width:2794px;height:56px;background:linear-gradient(#3d4149,#2f333a);border-radius:9px 9px 0 0;box-shadow:inset 0 1px 0 rgba(255,255,255,.1)"></i>
<i class=a style="left:1019px;top:948px;width:2794px;height:131px;background:linear-gradient(#384048,#30353d 45%,#2c3138 80%);"></i>
<svg class=a style="left:1031px;top:902px;" width="34" height="34" viewBox="0 0 34 34"><defs><linearGradient id="kk" x1="0" y1="0" x2="1" y2="1"><stop offset="0" stop-color="#4a5052"/><stop offset="1" stop-color="#303436"/></linearGradient></defs><rect width="34" height="34" rx="1.500" fill="url(#kk)"/><path d="M13 9l8 8-8 8" fill="none" stroke="#f0f0f0" stroke-width="1.800"/></svg>
<svg class=a style="left:1084px;top:905px;" width="26" height="26" viewBox="0 0 26 26"><path d="M15 1l9 9-3 1.500-4.500 4.500v5l-4 1-9-9 1-4h5L14 4.500z" fill="#f2f3f5"/><path d="M8 17l-7 8" stroke="#f2f3f5" stroke-width="2.600"/></svg>
<div class=a style="top:907.85px;font:25px/25px 'DejaVu Sans','Noto Sans CJK TC',sans-serif;color:#eceff4;white-space:pre;letter-spacing:-0.5px;left:1415.5px;width:2000px;text-align:center;">chezmoi : tmux: client — Konsole</div>
<svg class=a style="left:3672px;top:903px;" width="130" height="36" viewBox="0 0 130 36"><path d="M5 12l11 11 11-11M53 23l11-11 11 11" fill="none" stroke="#f2f3f5" stroke-width="2.400"/><circle cx="112" cy="17.500" r="17" fill="#e0495d"/><path d="M104 9.500l16 16M120 9.500l-16 16" stroke="#2a1215" stroke-width="2.200"/></svg>
<div class=a style="top:966.93px;font:25.5px/25.5px 'DejaVu Sans','Noto Sans CJK TC',sans-serif;color:#eceff4;white-space:pre;letter-spacing:-0.4px;left:1040px;">檔案(F)</div>
<div class=a style="top:966.93px;font:25.5px/25.5px 'DejaVu Sans','Noto Sans CJK TC',sans-serif;color:#eceff4;white-space:pre;letter-spacing:-0.4px;left:1161px;">編輯(E)</div>
<div class=a style="top:966.93px;font:25.5px/25.5px 'DejaVu Sans','Noto Sans CJK TC',sans-serif;color:#eceff4;white-space:pre;letter-spacing:-0.4px;left:1283px;">檢視(V)</div>
<div class=a style="top:966.93px;font:25.5px/25.5px 'DejaVu Sans','Noto Sans CJK TC',sans-serif;color:#eceff4;white-space:pre;letter-spacing:-0.4px;left:1407px;">書籤(B)</div>
<div class=a style="top:966.93px;font:25.5px/25.5px 'DejaVu Sans','Noto Sans CJK TC',sans-serif;color:#eceff4;white-space:pre;letter-spacing:-0.4px;left:1534px;">擴充元件</div>
<div class=a style="top:966.93px;font:25.5px/25.5px 'DejaVu Sans','Noto Sans CJK TC',sans-serif;color:#eceff4;white-space:pre;letter-spacing:-0.4px;left:1677px;">設定(S)</div>
<div class=a style="top:966.93px;font:25.5px/25.5px 'DejaVu Sans','Noto Sans CJK TC',sans-serif;color:#eceff4;white-space:pre;letter-spacing:-0.4px;left:1800px;">說明(H)</div>
<i class=a style="left:1105px;top:1015px;width:1314px;height:63px;background:#2a2e35;border-radius:8px 8px 0 0"></i>
<i class=a style="left:1312px;top:1015px;width:1.5px;height:63px;background:#30353c;"></i>
<i class=a style="left:1565px;top:1015px;width:1.5px;height:63px;background:#30353c;"></i>
<i class=a style="left:1821px;top:1015px;width:1.5px;height:63px;background:#30353c;"></i>
<i class=a style="left:2165px;top:1015px;width:1.5px;height:63px;background:#30353c;"></i>
<i class=a style="left:1821px;top:1013px;width:345px;height:66px;background:#2e333a;border-radius:7px 7px 0 0;box-shadow:inset 0 1px 0 #454a52,inset 1px 0 0 #3c4148,inset -1px 0 0 #3c4148"></i>
<i class=a style="left:1020px;top:1077px;width:2792px;height:2px;background:#3d434c;"></i>
<svg class=a style="left:1035px;top:1034px;" width="60" height="32" viewBox="0 0 60 32"><path d="M2 3h11v5h11v20H2z" fill="none" stroke="#eceff4" stroke-width="2.200"/><path d="M13 3h11v5" fill="#c9cdd4"/><path d="M17 16v10M12 21h10" stroke="#eceff4" stroke-width="2"/><path d="M37 15l8 8 8-8" fill="none" stroke="#eceff4" stroke-width="3"/></svg>
<div class=a style="top:1034.85px;font:25px/25px 'DejaVu Sans','Noto Sans CJK TC',sans-serif;color:#eceff4;white-space:pre;letter-spacing:-0.8px;left:1126px;">yuan : zsh</div>
<svg class=a style="left:1262px;top:1037px;" width="20" height="20" viewBox="0 0 20 20"><path d="M1 1l18 18M19 1L1 19" stroke="#b9bdc6" stroke-width="2"/></svg>
<div class=a style="top:1034.85px;font:25px/25px 'DejaVu Sans','Noto Sans CJK TC',sans-serif;color:#eceff4;white-space:pre;letter-spacing:-0.8px;left:1337px;">chezmoi : zsh</div>
<svg class=a style="left:1514px;top:1037px;" width="20" height="20" viewBox="0 0 20 20"><path d="M1 1l18 18M19 1L1 19" stroke="#b9bdc6" stroke-width="2"/></svg>
<div class=a style="top:1034.85px;font:25px/25px 'DejaVu Sans','Noto Sans CJK TC',sans-serif;color:#eceff4;white-space:pre;letter-spacing:-0.8px;left:1589px;">chezmoi : zsh</div>
<svg class=a style="left:1766px;top:1037px;" width="20" height="20" viewBox="0 0 20 20"><path d="M1 1l18 18M19 1L1 19" stroke="#b9bdc6" stroke-width="2"/></svg>
<div class=a style="top:1034.85px;font:25px/25px 'DejaVu Sans','Noto Sans CJK TC',sans-serif;color:#eceff4;white-space:pre;letter-spacing:-0.8px;left:1841px;">chezmoi : tmux: client</div>
<svg class=a style="left:2120px;top:1037px;" width="20" height="20" viewBox="0 0 20 20"><path d="M1 1l18 18M19 1L1 19" stroke="#f2f3f5" stroke-width="2.600"/></svg>
<div class=a style="top:1034.85px;font:25px/25px 'DejaVu Sans','Noto Sans CJK TC',sans-serif;color:#eceff4;white-space:pre;letter-spacing:-0.8px;left:2196px;">chezmoi : zsh</div>
<svg class=a style="left:2372px;top:1037px;" width="20" height="20" viewBox="0 0 20 20"><path d="M1 1l18 18M19 1L1 19" stroke="#b9bdc6" stroke-width="2"/></svg>
<svg class=a style="left:3776px;top:1037px;" width="16" height="24" viewBox="0 0 16 24"><path d="M11 1.500L2 13h5.500L5 22.500 14 10H8.500z" fill="#eceff4"/></svg>
<i class=a style="left:1019px;top:1079px;width:2794px;height:1289px;background:rgba(46,52,64,.91);"></i>
<i class=a style="left:1020px;top:1113px;width:6px;height:578px;background:#5f7594;"></i>
<i class=a style="left:3778px;top:1079px;width:34px;height:1288px;background:#272c34;"></i>
<i class=a style="left:3782px;top:1109px;width:26px;height:1201px;background:#383e48;border-radius:8px;box-shadow:inset 0 0 0 4px #181b20,inset 0 0 0 5px #2c3139"></i>
<svg class=a style="left:3783px;top:1084px;" width="24" height="20" viewBox="0 0 24 20"><path d="M3.500 15l8.500-9 8.500 9" fill="none" stroke="#555c66" stroke-width="3.400"/></svg>
<svg class=a style="left:3783px;top:2316px;" width="24" height="48" viewBox="0 0 24 48"><path d="M3.500 15l8.500-9 8.500 9M3.500 32l8.500 9 8.500-9" fill="none" stroke="#555c66" stroke-width="3.400"/></svg>
<i class=a style="left:2602px;top:1079px;width:1.5px;height:901px;background:#c8ced9;"></i>
<i class=a style="left:1026px;top:1979px;width:2736px;height:2px;background:#a3be8c;"></i>
<i class=a style="left:1838px;top:1079px;width:308px;height:34px;background:#a3be8c;"></i>
<svg class=a style="left:2146px;top:1079px;" width="16" height="34" viewBox="0 0 16 34"><path d="M0 0l16 17L0 34z" fill="#a3be8c"/></svg>
<div class="a k" style="left:1872px;top:1079px;font-size:16px;letter-spacing:-1px;font-family:'DejaVu Sans',sans-serif"><span style="color:#505a74;font-weight:bold;">git</span></div>
<svg class=a style="left:1905px;top:1079px;" width="22" height="34" viewBox="0 0 22 34"><circle cx="5" cy="8" r="2.600" fill="none" stroke="#505a74" stroke-width="2"/><circle cx="16" cy="10" r="2.600" fill="none" stroke="#505a74" stroke-width="2"/><circle cx="5" cy="27" r="2.600" fill="none" stroke="#505a74" stroke-width="2"/><path d="M5 10.500v14M16 12.500q0 7-11 9" fill="none" stroke="#505a74" stroke-width="2"/></svg>
<div class="a k" style="left:1938px;top:1079px;"><span style="color:#505a74;">master </span><span style="color:#505a74;">↑</span><span style="color:#505a74;">1 *1</span></div>
<i class=a style="left:1406px;top:1079px;width:452px;height:34px;background:#81a1c1;border-radius:0 17px 17px 0"></i>
<svg class=a style="left:1442px;top:1079px;" width="26" height="34" viewBox="0 0 26 34"><path d="M0 11.300q0-.800.800-.800h5.200l2.300 2.300h6q.800 0 .800.800v1.200H4.200q-.900 0-1.200.800L0 22z" fill="#e5e9f0"/><path d="M4.600 16.300h14l-3 6.500q-.300.700-1 .700H.300z" fill="#e5e9f0"/></svg>
<div class="a k" style="left:1474px;top:1079px;"><span style="color:#e8ecf2;">~/</span><span style="color:#e8ecf2;font-weight:bold;">.local</span><span style="color:#e8ecf2;">/</span><span style="color:#e8ecf2;font-weight:bold;">share</span><span style="color:#e8ecf2;">/</span><span style="color:#e8ecf2;font-weight:bold;">chezmoi</span></div>
<i class=a style="left:1070px;top:1079px;width:356px;height:34px;background:#56627f;border-radius:0 17px 17px 0"></i>
<div class="a k" style="left:1106px;top:1079px;"><span style="color:#ebcb8b;">yuan@Yuan<b class=h>-</b>XPS<b class=h>-</b>9500</span></div>
<i class=a style="left:1026px;top:1079px;width:64px;height:34px;background:#d8dee9;border-radius:0 17px 17px 0"></i>
<svg class=a style="left:1040px;top:1079px;" width="22" height="34" viewBox="0 0 22 34"><path d="M0.600 7.500h12.200v6H6.200v13H0.600zM7 14.300h5.800v12.200H7zM13.800 7.500H20v19h-6.200z" fill="#0b0c10"/></svg>
<div class="a k" style="left:2178px;top:1079px;"><span style="color:#a3be8c;">neofetch</span></div>
<i class=a style="left:1026px;top:1113px;width:288px;height:136px;background:#a3be8c;"></i>
<i class=a style="left:1026px;top:1249px;width:128px;height:340px;background:#a3be8c;"></i>
<i class=a style="left:1186px;top:1283px;width:128px;height:306px;background:#a3be8c;"></i>
<i class=a style="left:1346px;top:1113px;width:128px;height:476px;background:#a3be8c;"></i>
<div class="a k" style="left:1522px;top:1113px;"><span style="color:#a3be8c;font-weight:bold;">yuan</span><span style="color:#d8dee9;">@</span><span style="color:#a3be8c;font-weight:bold;">Yuan<b class=h>-</b>XPS<b class=h>-</b>9500</span></div>
<div class="a k" style="left:1522px;top:1147px;"><span style="color:#d8dee9;"><b class=h>-</b><b class=h>-</b><b class=h>-</b><b class=h>-</b><b class=h>-</b><b class=h>-</b><b class=h>-</b><b class=h>-</b><b class=h>-</b><b class=h>-</b><b class=h>-</b><b class=h>-</b><b class=h>-</b><b class=h>-</b><b class=h>-</b><b class=h>-</b><b class=h>-</b><b class=h>-</b></span></div>
<div class="a k" style="left:1522px;top:1181px;"><span style="color:#a3be8c;font-weight:bold;">OS</span><span style="color:#d8dee9;">: Manjaro Linux x86_64</span></div>
<div class="a k" style="left:1522px;top:1215px;"><span style="color:#a3be8c;font-weight:bold;">Host</span><span style="color:#d8dee9;">: XPS 15 9500</span></div>
<div class="a k" style="left:1522px;top:1249px;"><span style="color:#a3be8c;font-weight:bold;">Kernel</span><span style="color:#d8dee9;">: 6.14.0<b class=h>-</b>2<b class=h>-</b>rt3<b class=h>-</b>MANJARO</span></div>
<div class="a k" style="left:1522px;top:1283px;"><span style="color:#a3be8c;font-weight:bold;">Uptime</span><span style="color:#d8dee9;">: 1 day, 18 hours, 8 mins</span></div>
<div class="a k" style="left:1522px;top:1317px;"><span style="color:#a3be8c;font-weight:bold;">Packages</span><span style="color:#d8dee9;">: 2798 (pacman), 104 (flatpak)</span></div>
<div class="a k" style="left:1522px;top:1351px;"><span style="color:#a3be8c;font-weight:bold;">Shell</span><span style="color:#d8dee9;">: zsh 5.9</span></div>
<div class="a k" style="left:1522px;top:1385px;"><span style="color:#a3be8c;font-weight:bold;">Resolution</span><span style="color:#d8dee9;">: 3840x2400</span></div>
<div class="a k" style="left:1522px;top:1419px;"><span style="color:#a3be8c;font-weight:bold;">DE</span><span style="color:#d8dee9;">: Plasma 6.3.5</span></div>
<div class="a k" style="left:1522px;top:1453px;"><span style="color:#a3be8c;font-weight:bold;">WM</span><span style="color:#d8dee9;">: kwin</span></div>
<div class="a k" style="left:1522px;top:1487px;"><span style="color:#a3be8c;font-weight:bold;">Theme</span><span style="color:#d8dee9;">: KvArc [Plasma], Breeze [GTK2/3]</span></div>
<div class="a k" style="left:1522px;top:1521px;"><span style="color:#a3be8c;font-weight:bold;">Icons</span><span style="color:#d8dee9;">: breeze [Plasma], breeze [GTK2/3]</span></div>
<div class="a k" style="left:1522px;top:1555px;"><span style="color:#a3be8c;font-weight:bold;">Terminal</span><span style="color:#d8dee9;">: tmux</span></div>
<div class="a k" style="left:1522px;top:1589px;"><span style="color:#a3be8c;font-weight:bold;">CPU</span><span style="color:#d8dee9;">: Intel i7<b class=h>-</b>10750H (12) @ 5.000GHz</span></div>
<div class="a k" style="left:1522px;top:1623px;"><span style="color:#a3be8c;font-weight:bold;">GPU</span><span style="color:#d8dee9;">: Intel CometLake<b class=h>-</b>H GT2 [UHD Graphics]</span></div>
<div class="a k" style="left:1522px;top:1657px;"><span style="color:#a3be8c;font-weight:bold;">GPU</span><span style="color:#d8dee9;">: NVIDIA GeForce GTX 1650 Ti Mobile</span></div>
<div class="a k" style="left:1522px;top:1691px;"><span style="color:#a3be8c;font-weight:bold;">Memory</span><span style="color:#d8dee9;">: 21463MiB / 64046MiB</span></div>
<i class=a style="left:1522px;top:1759px;width:48px;height:68px;background:#58647d;"></i>
<i class=a style="left:1570px;top:1759px;width:48px;height:68px;background:#bf616a;"></i>
<i class=a style="left:1618px;top:1759px;width:48px;height:68px;background:#a3be8c;"></i>
<i class=a style="left:1666px;top:1759px;width:48px;height:68px;background:#ebcb8b;"></i>
<i class=a style="left:1714px;top:1759px;width:48px;height:68px;background:#81a1c1;"></i>
<i class=a style="left:1762px;top:1759px;width:48px;height:68px;background:#b48ead;"></i>
<i class=a style="left:1810px;top:1759px;width:48px;height:68px;background:#88c0d0;"></i>
<i class=a style="left:1858px;top:1759px;width:48px;height:68px;background:#dde2ec;"></i>
<i class=a style="left:1838px;top:1929px;width:308px;height:34px;background:#a3be8c;"></i>
<svg class=a style="left:2146px;top:1929px;" width="16" height="34" viewBox="0 0 16 34"><path d="M0 0l16 17L0 34z" fill="#a3be8c"/></svg>
<div class="a k" style="left:1872px;top:1929px;font-size:16px;letter-spacing:-1px;font-family:'DejaVu Sans',sans-serif"><span style="color:#505a74;font-weight:bold;">git</span></div>
<svg class=a style="left:1905px;top:1929px;" width="22" height="34" viewBox="0 0 22 34"><circle cx="5" cy="8" r="2.600" fill="none" stroke="#505a74" stroke-width="2"/><circle cx="16" cy="10" r="2.600" fill="none" stroke="#505a74" stroke-width="2"/><circle cx="5" cy="27" r="2.600" fill="none" stroke="#505a74" stroke-width="2"/><path d="M5 10.500v14M16 12.500q0 7-11 9" fill="none" stroke="#505a74" stroke-width="2"/></svg>
<div class="a k" style="left:1938px;top:1929px;"><span style="color:#505a74;">master </span><span style="color:#505a74;">↑</span><span style="color:#505a74;">1 *1</span></div>
<i class=a style="left:1406px;top:1929px;width:452px;height:34px;background:#81a1c1;border-radius:0 17px 17px 0"></i>
<svg class=a style="left:1442px;top:1929px;" width="26" height="34" viewBox="0 0 26 34"><path d="M0 11.300q0-.800.800-.800h5.200l2.300 2.300h6q.800 0 .800.800v1.200H4.200q-.900 0-1.200.800L0 22z" fill="#e5e9f0"/><path d="M4.600 16.300h14l-3 6.500q-.300.700-1 .700H.300z" fill="#e5e9f0"/></svg>
<div class="a k" style="left:1474px;top:1929px;"><span style="color:#e8ecf2;">~/</span><span style="color:#e8ecf2;font-weight:bold;">.local</span><span style="color:#e8ecf2;">/</span><span style="color:#e8ecf2;font-weight:bold;">share</span><span style="color:#e8ecf2;">/</span><span style="color:#e8ecf2;font-weight:bold;">chezmoi</span></div>
<i class=a style="left:1070px;top:1929px;width:356px;height:34px;background:#56627f;border-radius:0 17px 17px 0"></i>
<div class="a k" style="left:1106px;top:1929px;"><span style="color:#ebcb8b;">yuan@Yuan<b class=h>-</b>XPS<b class=h>-</b>9500</span></div>
<i class=a style="left:1026px;top:1929px;width:64px;height:34px;background:#d8dee9;border-radius:0 17px 17px 0"></i>
<svg class=a style="left:1040px;top:1929px;" width="22" height="34" viewBox="0 0 22 34"><path d="M0.600 7.500h12.200v6H6.200v13H0.600zM7 14.300h5.800v12.200H7zM13.800 7.500H20v19h-6.200z" fill="#0b0c10"/></svg>
<i class=a style="left:2990px;top:1895px;width:740px;height:34px;background:#81a1c1;"></i>
<svg class=a style="left:3730px;top:1895px;" width="16" height="34" viewBox="0 0 16 34"><path d="M0 0l16 17L0 34z" fill="#81a1c1"/></svg>
<svg class=a style="left:3026px;top:1895px;" width="26" height="34" viewBox="0 0 26 34"><path d="M0 11.300q0-.800.800-.800h5.200l2.300 2.300h6q.800 0 .800.800v1.200H4.200q-.900 0-1.200.800L0 22z" fill="#e5e9f0"/><path d="M4.600 16.300h14l-3 6.500q-.300.700-1 .700H.300z" fill="#e5e9f0"/></svg>
<div class="a k" style="left:3058px;top:1895px;"><span style="color:#e8ecf2;">~/</span><span style="color:#e8ecf2;font-weight:bold;">Pictures</span><span style="color:#e8ecf2;">/</span><span style="color:#e8ecf2;font-weight:bold;">gallery<b class=h>-</b>dl</span><span style="color:#e8ecf2;">/</span><span style="color:#e8ecf2;font-weight:bold;">twitter</span><span style="color:#e8ecf2;">/</span><span style="color:#e8ecf2;font-weight:bold;">Zr60v ✦<b class=w>絢</b><b class=w>瀨</b></span></div>
<i class=a style="left:2654px;top:1895px;width:356px;height:34px;background:#56627f;border-radius:0 17px 17px 0"></i>
<div class="a k" style="left:2690px;top:1895px;"><span style="color:#ebcb8b;">yuan@Yuan<b class=h>-</b>XPS<b class=h>-</b>9500</span></div>
<i class=a style="left:2610px;top:1895px;width:64px;height:34px;background:#d8dee9;border-radius:0 17px 17px 0"></i>
<svg class=a style="left:2624px;top:1895px;" width="22" height="34" viewBox="0 0 22 34"><path d="M0.600 7.500h12.200v6H6.200v13H0.600zM7 14.300h5.800v12.200H7zM13.800 7.500H20v19h-6.200z" fill="#0b0c10"/></svg>
<svg class=a style="left:3154px;top:1929px;" width="16" height="34" viewBox="0 0 16 34"><path d="M16 0L0 17l16 17z" fill="#56627f"/></svg>
<i class=a style="left:3170px;top:1929px;width:196px;height:34px;background:#56627f;"></i>
<div class="a k" style="left:3186px;top:1929px;font-size:22px"><span style="color:#a3be8c;">✔</span></div>
<i class=a style="left:3218px;top:1929px;width:148px;height:34px;background:#ebcb8b;border-radius:17px 0 0 17px"></i>
<div class="a k" style="left:3250px;top:1929px;"><span style="color:#505a74;">21s</span></div>
<svg class=a style="left:3313px;top:1929px;" width="22" height="34" viewBox="0 0 22 34"><path d="M1 6h18.500v3H1zM1 24.700h18.500v3H1zM3.500 9h13.500l-6.750 7.800zM10.250 16.800l6.750 7.900H3.500z" fill="#505a74"/><path d="M10.250 19.500l3.300 4.200h-6.600z" fill="#ebcb8b"/></svg>
<i class=a style="left:3346px;top:1929px;width:212px;height:34px;background:#a3be8c;border-radius:17px 0 0 17px"></i>
<div class="a k" style="left:3378px;top:1929px;"><span style="color:#e5e9f0;">23.11.1</span></div>
<svg class=a style="left:3506px;top:1929px;" width="22" height="34" viewBox="0 0 22 34"><path d="M10.300 6.800l9.300 8v11.500h-6.300v-8.500h-6v8.500H1V14.800z" fill="#e5e9f0"/></svg>
<i class=a style="left:3538px;top:1929px;width:208px;height:34px;background:#d8dee9;border-radius:17px 0 0 17px"></i>
<div class="a k" style="left:3570px;top:1929px;"><span style="color:#505a74;">13:02:40</span></div>
<svg class=a style="left:3714px;top:1929px;" width="20" height="34" viewBox="0 0 20 34"><circle cx="9" cy="17" r="8" fill="none" stroke="#505a74" stroke-width="2.200"/><path d="M9 11.500v6h4.500" fill="none" stroke="#505a74" stroke-width="2"/></svg>
<i class=a style="left:1838px;top:1997px;width:308px;height:34px;background:#a3be8c;"></i>
<svg class=a style="left:2146px;top:1997px;" width="16" height="34" viewBox="0 0 16 34"><path d="M0 0l16 17L0 34z" fill="#a3be8c"/></svg>
<div class="a k" style="left:1872px;top:1997px;font-size:16px;letter-spacing:-1px;font-family:'DejaVu Sans',sans-serif"><span style="color:#505a74;font-weight:bold;">git</span></div>
<svg class=a style="left:1905px;top:1997px;" width="22" height="34" viewBox="0 0 22 34"><circle cx="5" cy="8" r="2.600" fill="none" stroke="#505a74" stroke-width="2"/><circle cx="16" cy="10" r="2.600" fill="none" stroke="#505a74" stroke-width="2"/><circle cx="5" cy="27" r="2.600" fill="none" stroke="#505a74" stroke-width="2"/><path d="M5 10.500v14M16 12.500q0 7-11 9" fill="none" stroke="#505a74" stroke-width="2"/></svg>
<div class="a k" style="left:1938px;top:1997px;"><span style="color:#505a74;">master </span><span style="color:#505a74;">↑</span><span style="color:#505a74;">1 *1</span></div>
<i class=a style="left:1406px;top:1997px;width:452px;height:34px;background:#81a1c1;border-radius:0 17px 17px 0"></i>
<svg class=a style="left:1442px;top:1997px;" width="26" height="34" viewBox="0 0 26 34"><path d="M0 11.300q0-.800.800-.800h5.200l2.300 2.300h6q.800 0 .800.800v1.200H4.200q-.900 0-1.200.800L0 22z" fill="#e5e9f0"/><path d="M4.600 16.300h14l-3 6.500q-.300.700-1 .700H.300z" fill="#e5e9f0"/></svg>
<div class="a k" style="left:1474px;top:1997px;"><span style="color:#e8ecf2;">~/</span><span style="color:#e8ecf2;font-weight:bold;">.local</span><span style="color:#e8ecf2;">/</span><span style="color:#e8ecf2;font-weight:bold;">share</span><span style="color:#e8ecf2;">/</span><span style="color:#e8ecf2;font-weight:bold;">chezmoi</span></div>
<i class=a style="left:1070px;top:1997px;width:356px;height:34px;background:#56627f;border-radius:0 17px 17px 0"></i>
<div class="a k" style="left:1106px;top:1997px;"><span style="color:#ebcb8b;">yuan@Yuan<b class=h>-</b>XPS<b class=h>-</b>9500</span></div>
<i class=a style="left:1026px;top:1997px;width:64px;height:34px;background:#d8dee9;border-radius:0 17px 17px 0"></i>
<svg class=a style="left:1040px;top:1997px;" width="22" height="34" viewBox="0 0 22 34"><path d="M0.600 7.500h12.200v6H6.200v13H0.600zM7 14.300h5.800v12.200H7zM13.800 7.500H20v19h-6.200z" fill="#0b0c10"/></svg>
<div class="a k" style="left:2178px;top:1997px;"><span style="color:#81a1c1;">ls</span></div>
<svg class=a style="left:3282px;top:1997px;" width="16" height="34" viewBox="0 0 16 34"><path d="M16 0L0 17l16 17z" fill="#56627f"/></svg>
<i class=a style="left:3298px;top:1997px;width:68px;height:34px;background:#56627f;"></i>
<div class="a k" style="left:3314px;top:1997px;font-size:22px"><span style="color:#a3be8c;">✔</span></div>
<i class=a style="left:3346px;top:1997px;width:212px;height:34px;background:#a3be8c;border-radius:17px 0 0 17px"></i>
<div class="a k" style="left:3378px;top:1997px;"><span style="color:#e5e9f0;">23.11.1</span></div>
<svg class=a style="left:3506px;top:1997px;" width="22" height="34" viewBox="0 0 22 34"><path d="M10.300 6.800l9.300 8v11.500h-6.300v-8.500h-6v8.500H1V14.800z" fill="#e5e9f0"/></svg>
<i class=a style="left:3538px;top:1997px;width:208px;height:34px;background:#d8dee9;border-radius:17px 0 0 17px"></i>
<div class="a k" style="left:3570px;top:1997px;"><span style="color:#505a74;">13:00:45</span></div>
<svg class=a style="left:3714px;top:1997px;" width="20" height="34" viewBox="0 0 20 34"><circle cx="9" cy="17" r="8" fill="none" stroke="#505a74" stroke-width="2.200"/><path d="M9 11.500v6h4.500" fill="none" stroke="#505a74" stroke-width="2"/></svg>
<i class=a style="left:1838px;top:2167px;width:308px;height:34px;background:#a3be8c;"></i>
<svg class=a style="left:2146px;top:2167px;" width="16" height="34" viewBox="0 0 16 34"><path d="M0 0l16 17L0 34z" fill="#a3be8c"/></svg>
<div class="a k" style="left:1872px;top:2167px;font-size:16px;letter-spacing:-1px;font-family:'DejaVu Sans',sans-serif"><span style="color:#505a74;font-weight:bold;">git</span></div>
<svg class=a style="left:1905px;top:2167px;" width="22" height="34" viewBox="0 0 22 34"><circle cx="5" cy="8" r="2.600" fill="none" stroke="#505a74" stroke-width="2"/><circle cx="16" cy="10" r="2.600" fill="none" stroke="#505a74" stroke-width="2"/><circle cx="5" cy="27" r="2.600" fill="none" stroke="#505a74" stroke-width="2"/><path d="M5 10.500v14M16 12.500q0 7-11 9" fill="none" stroke="#505a74" stroke-width="2"/></svg>
<div class="a k" style="left:1938px;top:2167px;"><span style="color:#505a74;">master </span><span style="color:#505a74;">↑</span><span style="color:#505a74;">1 *1</span></div>
<i class=a style="left:1406px;top:2167px;width:452px;height:34px;background:#81a1c1;border-radius:0 17px 17px 0"></i>
<svg class=a style="left:1442px;top:2167px;" width="26" height="34" viewBox="0 0 26 34"><path d="M0 11.300q0-.800.800-.800h5.200l2.300 2.300h6q.800 0 .800.800v1.200H4.200q-.900 0-1.200.800L0 22z" fill="#e5e9f0"/><path d="M4.600 16.300h14l-3 6.500q-.300.700-1 .700H.300z" fill="#e5e9f0"/></svg>
<div class="a k" style="left:1474px;top:2167px;"><span style="color:#e8ecf2;">~/</span><span style="color:#e8ecf2;font-weight:bold;">.local</span><span style="color:#e8ecf2;">/</span><span style="color:#e8ecf2;font-weight:bold;">share</span><span style="color:#e8ecf2;">/</span><span style="color:#e8ecf2;font-weight:bold;">chezmoi</span></div>
<i class=a style="left:1070px;top:2167px;width:356px;height:34px;background:#56627f;border-radius:0 17px 17px 0"></i>
<div class="a k" style="left:1106px;top:2167px;"><span style="color:#ebcb8b;">yuan@Yuan<b class=h>-</b>XPS<b class=h>-</b>9500</span></div>
<i class=a style="left:1026px;top:2167px;width:64px;height:34px;background:#d8dee9;border-radius:0 17px 17px 0"></i>
<svg class=a style="left:1040px;top:2167px;" width="22" height="34" viewBox="0 0 22 34"><path d="M0.600 7.500h12.200v6H6.200v13H0.600zM7 14.300h5.800v12.200H7zM13.800 7.500H20v19h-6.200z" fill="#0b0c10"/></svg>
<svg class=a style="left:3282px;top:2167px;" width="16" height="34" viewBox="0 0 16 34"><path d="M16 0L0 17l16 17z" fill="#56627f"/></svg>
<i class=a style="left:3298px;top:2167px;width:68px;height:34px;background:#56627f;"></i>
<div class="a k" style="left:3314px;top:2167px;font-size:22px"><span style="color:#a3be8c;">✔</span></div>
<i class=a style="left:3346px;top:2167px;width:212px;height:34px;background:#a3be8c;border-radius:17px 0 0 17px"></i>
<div class="a k" style="left:3378px;top:2167px;"><span style="color:#e5e9f0;">23.11.1</span></div>
<svg class=a style="left:3506px;top:2167px;" width="22" height="34" viewBox="0 0 22 34"><path d="M10.300 6.800l9.300 8v11.500h-6.300v-8.500h-6v8.500H1V14.800z" fill="#e5e9f0"/></svg>
<i class=a style="left:3538px;top:2167px;width:208px;height:34px;background:#d8dee9;border-radius:17px 0 0 17px"></i>
<div class="a k" style="left:3570px;top:2167px;"><span style="color:#505a74;">13:01:56</span></div>
<svg class=a style="left:3714px;top:2167px;" width="20" height="34" viewBox="0 0 20 34"><circle cx="9" cy="17" r="8" fill="none" stroke="#505a74" stroke-width="2.200"/><path d="M9 11.500v6h4.500" fill="none" stroke="#505a74" stroke-width="2"/></svg>
<i class=a style="left:2178px;top:2169px;width:16px;height:31px;background:#d8dee9;"></i>
<svg class=a style="left:1105px;top:2031px;" width="24" height="34" viewBox="0 0 24 34"><path d="M2 6h9l6 6v15H2z" fill="#e5e9f0"/><path d="M11 6v6h6z" fill="#8d939f"/></svg>
<div class="a k" style="left:1154px;top:2031px;"><span style="color:#d8dee9;">chezmoi.code<b class=h>-</b>workspace</span></div>
<svg class=a style="left:1105px;top:2065px;" width="24" height="34" viewBox="0 0 24 34"><path d="M1 9.500l8-1.200v8.200H1zM10.500 8l9.500-1.500v10h-9.500zM1 18h8v8.200l-8-1.200zM10.500 18H20v10l-9.500-1.500z" fill="#e5e9f0"/></svg>
<div class="a k" style="left:1154px;top:2065px;"><span style="color:#d8dee9;">dconf.ini</span></div>
<svg class=a style="left:1105px;top:2099px;" width="24" height="34" viewBox="0 0 24 34"><path d="M2 6h9l6 6v15H2z" fill="#e5e9f0"/><path d="M11 6v6h6z" fill="#8d939f"/></svg>
<div class="a k" style="left:1154px;top:2099px;"><span style="color:#d8dee9;">dot_bashrc.tmpl</span></div>
<svg class=a style="left:1601px;top:2031px;" width="24" height="34" viewBox="0 0 24 34"><path d="M1.500 24V10h6l2.500 3h7.500v3M1.500 24l4-8h15.500l-4 8z" fill="none" stroke="#81a1c1" stroke-width="1.700"/></svg>
<div class="a k" style="left:1650px;top:2031px;"><span style="color:#81a1c1;">dot_config/</span></div>
<svg class=a style="left:1601px;top:2065px;" width="24" height="34" viewBox="0 0 24 34"><path d="M1.500 24V10h6l2.500 3h7.500v3M1.500 24l4-8h15.500l-4 8z" fill="none" stroke="#81a1c1" stroke-width="1.700"/></svg>
<div class="a k" style="left:1650px;top:2065px;"><span style="color:#81a1c1;">dot_continue/</span></div>
<svg class=a style="left:1601px;top:2099px;" width="24" height="34" viewBox="0 0 24 34"><path d="M2 6h9l6 6v15H2z" fill="#e5e9f0"/><path d="M11 6v6h6z" fill="#8d939f"/></svg>
<div class="a k" style="left:1650px;top:2099px;"><span style="color:#d8dee9;">dot_gitconfig.tmpl</span></div>
<svg class=a style="left:2033px;top:2031px;" width="24" height="34" viewBox="0 0 24 34"><path d="M2 6h9l6 6v15H2z" fill="#e5e9f0"/><path d="M11 6v6h6z" fill="#8d939f"/></svg>
<div class="a k" style="left:2082px;top:2031px;"><span style="color:#d8dee9;">dot_gitignore_global</span></div>
<svg class=a style="left:2033px;top:2065px;" width="24" height="34" viewBox="0 0 24 34"><path d="M2 6h9l6 6v15H2z" fill="#e5e9f0"/><path d="M11 6v6h6z" fill="#8d939f"/></svg>
<div class="a k" style="left:2082px;top:2065px;"><span style="color:#d8dee9;">dot_gvimrc</span></div>
<svg class=a style="left:2033px;top:2099px;" width="24" height="34" viewBox="0 0 24 34"><path d="M1.500 24V10h6l2.500 3h7.500v3M1.500 24l4-8h15.500l-4 8z" fill="none" stroke="#81a1c1" stroke-width="1.700"/></svg>
<div class="a k" style="left:2082px;top:2099px;"><span style="color:#81a1c1;">dot_local/</span></div>
<svg class=a style="left:2497px;top:2031px;" width="24" height="34" viewBox="0 0 24 34"><path d="M2 6h9l6 6v15H2z" fill="#e5e9f0"/><path d="M11 6v6h6z" fill="#8d939f"/></svg>
<div class="a k" style="left:2546px;top:2031px;"><span style="color:#d8dee9;">dot_p10k.zsh.tmpl</span></div>
<svg class=a style="left:2497px;top:2065px;" width="24" height="34" viewBox="0 0 24 34"><g transform="translate(10 17)"><circle r="5.500" fill="none" stroke="#e5e9f0" stroke-width="4"/><circle r="8" fill="none" stroke="#e5e9f0" stroke-width="3.200" stroke-dasharray="3.140 3.140"/></g></svg>
<div class="a k" style="left:2546px;top:2065px;"><span style="color:#d8dee9;">dot_tmux.conf</span></div>
<svg class=a style="left:2497px;top:2099px;" width="24" height="34" viewBox="0 0 24 34"><path d="M2 6h9l6 6v15H2z" fill="#e5e9f0"/><path d="M11 6v6h6z" fill="#8d939f"/></svg>
<div class="a k" style="left:2546px;top:2099px;"><span style="color:#d8dee9;">dot_vimrc.tmpl</span></div>
<svg class=a style="left:2913px;top:2031px;" width="24" height="34" viewBox="0 0 24 34"><path d="M2 6h9l6 6v15H2z" fill="#e5e9f0"/><path d="M11 6v6h6z" fill="#8d939f"/></svg>
<div class="a k" style="left:2962px;top:2031px;"><span style="color:#d8dee9;">dot_zshrc.tmpl</span></div>
<svg class=a style="left:2913px;top:2065px;" width="24" height="34" viewBox="0 0 24 34"><rect x="1" y="10" width="20" height="13" rx="2" fill="none" stroke="#e5e9f0" stroke-width="1.800"/><path d="M4.500 20v-7l2.500 3 2.500-3v7M15 13v6M12.500 17l2.500 3 2.500-3" fill="none" stroke="#e5e9f0" stroke-width="1.600"/></svg>
<div class="a k" style="left:2962px;top:2065px;"><span style="color:#d8dee9;">Readme.md</span></div>
<i class=a style="left:1026px;top:2303px;width:2736px;height:34px;background:#56627f;"></i>
<i class=a style="left:1250px;top:2303px;width:256px;height:34px;background:#d8dee9;"></i>
<svg class=a style="left:1506px;top:2303px;" width="16" height="34" viewBox="0 0 16 34"><path d="M0 0L16 34H0z" fill="#d8dee9"/></svg>
<i class=a style="left:1154px;top:2303px;width:96px;height:34px;background:#ebcb8b;"></i>
<svg class=a style="left:1250px;top:2303px;" width="16" height="34" viewBox="0 0 16 34"><path d="M0 0h16L0 34z" fill="#ebcb8b"/></svg>
<i class=a style="left:1026px;top:2303px;width:128px;height:34px;background:#88c0d0;"></i>
<svg class=a style="left:1154px;top:2303px;" width="16" height="34" viewBox="0 0 16 34"><path d="M0 0l16 17L0 34z" fill="#88c0d0"/></svg>
<div class="a k" style="left:1058px;top:2303px;"><span style="color:#505a74;font-weight:bold;">TERM</span></div>
<div class="a k" style="left:1186px;top:2303px;"><span style="color:#505a74;">□ 0</span></div>
<svg class=a style="left:1281px;top:2303px;" width="22" height="34" viewBox="0 0 22 34"><rect x="2" y="9" width="17" height="16" rx="1.500" fill="none" stroke="#505a74" stroke-width="1.800"/><path d="M2 17h17" stroke="#505a74" stroke-width="1.800"/></svg>
<svg class=a style="left:1314px;top:2303px;" width="16" height="34" viewBox="0 0 16 34"><path d="M14 1L2 33" stroke="#505a74" stroke-width="1.300"/></svg>
<svg class=a style="left:1345px;top:2303px;" width="22" height="34" viewBox="0 0 22 34"><rect x="2" y="9" width="17" height="16" rx="1.500" fill="none" stroke="#505a74" stroke-width="1.800"/><path d="M10.500 9v16" stroke="#505a74" stroke-width="1.800"/></svg>
<svg class=a style="left:1378px;top:2303px;" width="16" height="34" viewBox="0 0 16 34"><path d="M14 1L2 33" stroke="#505a74" stroke-width="1.300"/></svg>
<svg class=a style="left:1409px;top:2303px;" width="22" height="34" viewBox="0 0 22 34"><rect x="2" y="13" width="12" height="11" fill="none" stroke="#505a74" stroke-width="2.200"/><path d="M7 13V9h12v10h-5" fill="none" stroke="#505a74" stroke-width="2.200"/></svg>
<div class="a k" style="left:1442px;top:2303px;"><span style="color:#505a74;">3</span></div>
<svg class=a style="left:1472px;top:2303px;" width="22" height="34" viewBox="0 0 22 34"><path d="M10 8v18M1 17h18" stroke="#505a74" stroke-width="1.600"/></svg>
<svg class=a style="left:1554px;top:2303px;" width="16" height="34" viewBox="0 0 16 34"><path d="M12 1Q0 17 12 33" fill="none" stroke="#81a1c1" stroke-width="1.800"/></svg>
<div class="a k" style="left:1586px;top:2303px;"><span style="color:#81a1c1;">0</span><span style="color:#c5ccd9;">  zsh</span></div>
<svg class=a style="left:1746px;top:2303px;" width="16" height="34" viewBox="0 0 16 34"><path d="M4 1Q16 17 4 33" fill="none" stroke="#81a1c1" stroke-width="1.800"/></svg>
<i class=a style="left:1778px;top:2303px;width:208px;height:34px;background:#81a1c1;border-radius:17px"></i>
<div class="a k" style="left:1810px;top:2303px;"><span style="color:#56627f;">1</span></div>
<svg class=a style="left:1826px;top:2303px;" width="16" height="34" viewBox="0 0 16 34"><path d="M4 1Q16 17 4 33" fill="none" stroke="#56627f" stroke-width="1.800"/></svg>
<div class="a k" style="left:1858px;top:2303px;"><span style="color:#e5e9f0;">zsh*</span></div>
<svg class=a style="left:1936px;top:2303px;" width="24" height="34" viewBox="0 0 24 34"><path d="M2 8l18 18M20 8L2 26" stroke="#eceff4" stroke-width="2.200"/></svg>
<svg class=a style="left:2002px;top:2303px;" width="16" height="34" viewBox="0 0 16 34"><path d="M12 1Q0 17 12 33" fill="none" stroke="#81a1c1" stroke-width="1.800"/></svg>
<div class="a k" style="left:2018px;top:2303px;"><span style="color:#81a1c1;">2</span><span style="color:#c5ccd9;">  htop<b class=h>-</b></span></div>
<svg class=a style="left:2194px;top:2303px;" width="16" height="34" viewBox="0 0 16 34"><path d="M4 1Q16 17 4 33" fill="none" stroke="#81a1c1" stroke-width="1.800"/></svg>
<svg class=a style="left:2434px;top:2303px;" width="16" height="34" viewBox="0 0 16 34"><path d="M14 1L3 17l11 16" fill="none" stroke="#d8dee9" stroke-width="1.600"/></svg>
<div class="a k" style="left:2466px;top:2303px;font-size:22px"><span style="color:#d8dee9;">⇄</span></div>
<div class="a k" style="left:2498px;top:2303px;"><span style="color:#a3be8c;">↓574 B/s</span><span style="color:#d8dee9;"> </span><span style="color:#ebcb8b;">↑464 B/s</span></div>
<svg class=a style="left:2786px;top:2303px;" width="16" height="34" viewBox="0 0 16 34"><path d="M16 0L0 17l16 17z" fill="#88c0d0"/></svg>
<i class=a style="left:2802px;top:2303px;width:256px;height:34px;background:#88c0d0;"></i>
<svg class=a style="left:2818px;top:2303px;" width="30" height="34" viewBox="0 0 30 34"><rect x="5" y="8" width="17" height="18" rx="2" fill="none" stroke="#505a74" stroke-width="2.200"/><rect x="9.500" y="12.500" width="8" height="9" fill="none" stroke="#505a74" stroke-width="2"/><path d="M0.500 13h4.500M0.500 21h4.500M22 13h4.500M22 21h4.500M10 3.500v4.500M17 3.500v4.500M10 26v4.500M17 26v4.500" stroke="#505a74" stroke-width="2.200"/></svg>
<div class="a k" style="left:2850px;top:2303px;"><span style="color:#505a74;">10.6%</span></div>
<svg class=a style="left:2944px;top:2303px;" width="22" height="34" viewBox="0 0 22 34"><path d="M2 20l3-9h10l3 9v5H2zM2 20h16" fill="none" stroke="#505a74" stroke-width="1.700"/></svg>
<div class="a k" style="left:2978px;top:2303px;"><span style="color:#505a74;">501G</span></div>
<svg class=a style="left:3058px;top:2303px;" width="16" height="34" viewBox="0 0 16 34"><rect width="16" height="34" fill="#88c0d0"/><path d="M16 0L0 17l16 17z" fill="#ffc0cb"/></svg>
<i class=a style="left:3074px;top:2303px;width:272px;height:34px;background:#ffc0cb;"></i>
<div class="a k" style="left:3090px;top:2303px;"><span style="color:#505a74;">"Yuan<b class=h>-</b>XPS<b class=h>-</b>9500"</span></div>
<svg class=a style="left:3346px;top:2303px;" width="16" height="34" viewBox="0 0 16 34"><rect width="16" height="34" fill="#ffc0cb"/><path d="M16 0L0 17l16 17z" fill="#d8dee9"/></svg>
<i class=a style="left:3362px;top:2303px;width:400px;height:34px;background:#d8dee9;"></i>
<svg class=a style="left:3377px;top:2303px;" width="20" height="34" viewBox="0 0 20 34"><circle cx="9.500" cy="17" r="8" fill="none" stroke="#505a74" stroke-width="2.200"/><path d="M9.500 22v-8.500M5.800 16.500l3.700-3.700 3.700 3.700" fill="none" stroke="#505a74" stroke-width="2.200"/></svg>
<div class="a k" style="left:3410px;top:2303px;"><span style="color:#505a74;">1d 18h 17m</span></div>
<svg class=a style="left:3585px;top:2303px;" width="20" height="34" viewBox="0 0 20 34"><circle cx="9" cy="17" r="8" fill="none" stroke="#505a74" stroke-width="2.200"/><path d="M9 11.500v6h4.500" fill="none" stroke="#505a74" stroke-width="2"/></svg>
<div class="a k" style="left:3618px;top:2303px;"><span style="color:#505a74;">13:10:36</span></div>
<i class=a style="left:2610px;top:1079px;width:1000px;height:85px;background:#2b303b;"></i>
<i class=a style="left:2610px;top:1163px;width:1008px;height:11px;background:#1c2029;"></i>
<i class=a style="left:3610px;top:1079px;width:8px;height:95px;background:#1c2029;"></i>
<i class=a style="left:2610px;top:1180px;width:1000px;height:331px;background:#2b303b;"></i>
<i class=a style="left:2610px;top:1511px;width:1008px;height:7px;background:#1c2029;"></i>
<i class=a style="left:3610px;top:1180px;width:8px;height:338px;background:#1c2029;"></i>
<i class=a style="left:2610px;top:1521px;width:1000px;height:331px;background:#2b303b;"></i>
<i class=a style="left:2610px;top:1852px;width:1008px;height:5px;background:#05070b;"></i>
<i class=a style="left:3610px;top:1521px;width:8px;height:336px;background:#05070b;"></i>
<div class="a ui" style="left:2612px;top:1096px;font-family:'Liberation Sans',sans-serif;font-size:21px;line-height:30px;letter-spacing:2.300px;width:240px;text-align:center;color:#c9ced8;font-size:18px;">1000020072</div>
<div class="a ui" style="left:2612px;top:1124px;font-family:'Liberation Sans',sans-serif;font-size:21px;line-height:30px;letter-spacing:2.300px;width:240px;text-align:center;color:#c9ced8;font-size:18px;">959250547_1</div>
<div class="a ui" style="left:2860px;top:1096px;font-family:'Liberation Sans',sans-serif;font-size:21px;line-height:30px;letter-spacing:2.300px;width:240px;text-align:center;color:#c9ced8;font-size:18px;">1003100313</div>
<div class="a ui" style="left:2860px;top:1124px;font-family:'Liberation Sans',sans-serif;font-size:21px;line-height:30px;letter-spacing:2.300px;width:240px;text-align:center;color:#c9ced8;font-size:18px;">093906439_1</div>
<div class="a ui" style="left:3108px;top:1096px;font-family:'Liberation Sans',sans-serif;font-size:21px;line-height:30px;letter-spacing:2.300px;width:240px;text-align:center;color:#c9ced8;font-size:18px;">1009003304</div>
<div class="a ui" style="left:3108px;top:1124px;font-family:'Liberation Sans',sans-serif;font-size:21px;line-height:30px;letter-spacing:2.300px;width:240px;text-align:center;color:#c9ced8;font-size:18px;">151652527_1</div>
<div class="a ui" style="left:3356px;top:1096px;font-family:'Liberation Sans',sans-serif;font-size:21px;line-height:30px;letter-spacing:2.300px;width:240px;text-align:center;color:#c9ced8;font-size:18px;">1009000035</div>
<div class="a ui" style="left:3356px;top:1124px;font-family:'Liberation Sans',sans-serif;font-size:21px;line-height:30px;letter-spacing:2.300px;width:240px;text-align:center;color:#c9ced8;font-size:18px;">169472669_1</div>
<div class="a ui" style="left:2612px;top:1438px;font-family:'Liberation Sans',sans-serif;font-size:21px;line-height:30px;letter-spacing:2.300px;width:240px;text-align:center;color:#c9ced8;">1870400354</div>
<div class="a ui" style="left:2612px;top:1470px;font-family:'Liberation Sans',sans-serif;font-size:21px;line-height:30px;letter-spacing:2.300px;width:240px;text-align:center;color:#c9ced8;">367811664_1</div>
<div class="a ui" style="left:2860px;top:1438px;font-family:'Liberation Sans',sans-serif;font-size:21px;line-height:30px;letter-spacing:2.300px;width:240px;text-align:center;color:#c9ced8;">1883799351</div>
<div class="a ui" style="left:2860px;top:1470px;font-family:'Liberation Sans',sans-serif;font-size:21px;line-height:30px;letter-spacing:2.300px;width:240px;text-align:center;color:#c9ced8;">887303158_1</div>
<div class="a ui" style="left:3108px;top:1438px;font-family:'Liberation Sans',sans-serif;font-size:21px;line-height:30px;letter-spacing:2.300px;width:240px;text-align:center;color:#c9ced8;">1891044229</div>
<div class="a ui" style="left:3108px;top:1470px;font-family:'Liberation Sans',sans-serif;font-size:21px;line-height:30px;letter-spacing:2.300px;width:240px;text-align:center;color:#c9ced8;">171855798_1</div>
<div class="a ui" style="left:3356px;top:1438px;font-family:'Liberation Sans',sans-serif;font-size:21px;line-height:30px;letter-spacing:2.300px;width:240px;text-align:center;color:#c9ced8;">1894677071</div>
<div class="a ui" style="left:3356px;top:1470px;font-family:'Liberation Sans',sans-serif;font-size:21px;line-height:30px;letter-spacing:2.300px;width:240px;text-align:center;color:#c9ced8;">970099579_1</div>
<div class="a ui" style="left:2612px;top:1778px;font-family:'Liberation Sans',sans-serif;font-size:21px;line-height:30px;letter-spacing:2.300px;width:240px;text-align:center;color:#c9ced8;">1899648587</div>
<div class="a ui" style="left:2612px;top:1810px;font-family:'Liberation Sans',sans-serif;font-size:21px;line-height:30px;letter-spacing:2.300px;width:240px;text-align:center;color:#c9ced8;">203821782_1</div>
<div class="a ui" style="left:2860px;top:1778px;font-family:'Liberation Sans',sans-serif;font-size:21px;line-height:30px;letter-spacing:2.300px;width:240px;text-align:center;color:#c9ced8;">1900837734</div>
<div class="a ui" style="left:2860px;top:1810px;font-family:'Liberation Sans',sans-serif;font-size:21px;line-height:30px;letter-spacing:2.300px;width:240px;text-align:center;color:#c9ced8;">652276854_1</div>
<i class=a style="left:2618px;top:1079px;width:232px;height:4px;background:#c9cbe6;"></i>
<i class=a style="left:2892px;top:1079px;width:175px;height:4px;background:#b9b4c4;"></i>
<i class=a style="left:3140px;top:1079px;width:175px;height:4px;background:#a9cdea;"></i>
<i class=a style="left:3358px;top:1079px;width:240px;height:4px;background:#8f9fd0;"></i>
<svg class=a style="left:2618px;top:1183px;box-shadow:6px 8px 14px rgba(0,0,0,.55);" width="232" height="238" viewBox="0 0 232 238"><defs><filter id="g1"><feGaussianBlur stdDeviation="3.500"/></filter></defs><rect width="232" height="238" fill="#fbf8f6"/><g filter="url(#g1)">
<ellipse cx="160" cy="75" rx="55" ry="60" fill="#8a5a4c"/><ellipse cx="168" cy="95" rx="28" ry="26" fill="#f6dcd0"/>
<ellipse cx="45" cy="40" rx="42" ry="38" fill="#fff"/><ellipse cx="55" cy="30" rx="18" ry="6" fill="#f4b0a4"/>
<ellipse cx="40" cy="125" rx="40" ry="30" fill="#d9a26a"/><ellipse cx="70" cy="150" rx="42" ry="36" fill="#45406a"/><ellipse cx="75" cy="160" rx="24" ry="18" fill="#f3d9c8"/>
<ellipse cx="175" cy="165" rx="35" ry="45" fill="#b86a50"/><ellipse cx="195" cy="195" rx="30" ry="30" fill="#a04a3c"/><ellipse cx="80" cy="210" rx="40" ry="18" fill="#c98a5a"/><ellipse cx="30" cy="210" rx="25" ry="20" fill="#fff"/>
</g></svg>
<svg class=a style="left:2862px;top:1183px;box-shadow:6px 8px 14px rgba(0,0,0,.55);" width="240" height="238" viewBox="0 0 240 238"><defs><filter id="g2"><feGaussianBlur stdDeviation="3.500"/></filter></defs><rect width="240" height="238" fill="#bfe4f4"/><rect x="9" y="9" width="222" height="220" rx="10" fill="#fdfdfd"/><g filter="url(#g2)">
<ellipse cx="105" cy="70" rx="95" ry="70" fill="#f7e9ad"/><ellipse cx="130" cy="115" rx="55" ry="45" fill="#fdeee2"/><ellipse cx="105" cy="100" rx="14" ry="12" fill="#6a9ed0"/><ellipse cx="160" cy="95" rx="10" ry="11" fill="#6a9ed0"/>
<ellipse cx="120" cy="200" rx="80" ry="35" fill="#a9d8f0"/><ellipse cx="118" cy="170" rx="16" ry="18" fill="#3a4676"/><ellipse cx="50" cy="190" rx="42" ry="30" fill="#f6a9cc"/><ellipse cx="195" cy="190" rx="22" ry="30" fill="#fff4ea"/>
</g></svg>
<svg class=a style="left:3140px;top:1183px;box-shadow:6px 8px 14px rgba(0,0,0,.55);" width="178" height="238" viewBox="0 0 178 238"><defs><filter id="g3"><feGaussianBlur stdDeviation="3.500"/></filter></defs><rect width="178" height="238" fill="#f6f5fb"/><g filter="url(#g3)">
<ellipse cx="90" cy="45" rx="38" ry="36" fill="#3c3768"/><ellipse cx="90" cy="62" rx="22" ry="18" fill="#f8e4dc"/><ellipse cx="30" cy="50" rx="14" ry="45" fill="#5a5f96" transform="rotate(-25 30 50)"/>
<ellipse cx="90" cy="130" rx="40" ry="40" fill="#f2f2fa"/><ellipse cx="150" cy="160" rx="30" ry="60" fill="#7d88cc"/><ellipse cx="95" cy="200" rx="45" ry="30" fill="#34386a"/><ellipse cx="25" cy="205" rx="32" ry="35" fill="#7a5666"/><ellipse cx="92" cy="88" rx="8" ry="7" fill="#e8623a"/><ellipse cx="55" cy="78" rx="12" ry="8" fill="#e888a8"/><ellipse cx="122" cy="86" rx="10" ry="7" fill="#e888a8"/>
</g></svg>
<svg class=a style="left:3378px;top:1183px;box-shadow:6px 8px 14px rgba(0,0,0,.55);" width="198" height="238" viewBox="0 0 198 238"><defs><filter id="g4"><feGaussianBlur stdDeviation="3.500"/></filter></defs><rect width="198" height="238" fill="#f4f2fa"/><g filter="url(#g4)">
<ellipse cx="100" cy="55" rx="48" ry="42" fill="#dcc6ba"/><ellipse cx="100" cy="78" rx="24" ry="20" fill="#f9e8e0"/><ellipse cx="35" cy="40" rx="28" ry="25" fill="#c9b4a8"/><ellipse cx="170" cy="70" rx="26" ry="24" fill="#8a7a86"/>
<ellipse cx="90" cy="160" rx="60" ry="45" fill="#32335e"/><ellipse cx="150" cy="150" rx="25" ry="70" fill="#d9c2b2"/><ellipse cx="100" cy="125" rx="24" ry="16" fill="#fff"/><ellipse cx="110" cy="215" rx="40" ry="22" fill="#4a4a72"/><ellipse cx="35" cy="200" rx="30" ry="28" fill="#e6def0"/>
</g></svg>
<svg class=a style="left:2614px;top:1587px;box-shadow:6px 8px 14px rgba(0,0,0,.55);" width="240" height="108" viewBox="0 0 240 108"><rect width="240" height="108" fill="#0d111b"/><rect x="0" y="0" width="240" height="108" fill="#141c2e" opacity=".6"/>
<rect x="82" y="14" width="76" height="10" fill="#b9bdc8" opacity=".8"/>
<g><rect x="34" y="34" width="32" height="22" fill="#d9a84a"/><rect x="68" y="34" width="32" height="22" fill="#d0b080"/><rect x="104" y="34" width="32" height="22" fill="#b8bcc8"/><rect x="140" y="34" width="32" height="22" fill="#6a7088"/><rect x="176" y="34" width="32" height="22" fill="#5a4a90"/>
<rect x="34" y="58" width="32" height="22" fill="#c040a0"/><rect x="68" y="58" width="32" height="22" fill="#6a7088"/><rect x="104" y="58" width="32" height="22" fill="#c87898"/><rect x="140" y="58" width="32" height="22" fill="#c8ccd8"/><rect x="176" y="58" width="32" height="22" fill="#5a4a90"/></g>
<rect x="88" y="90" width="40" height="5" fill="#6a7490"/></svg>
<svg class=a style="left:2864px;top:1523px;box-shadow:6px 8px 14px rgba(0,0,0,.55);" width="236" height="238" viewBox="0 0 236 238"><defs><filter id="g6"><feGaussianBlur stdDeviation="3.500"/></filter></defs><rect width="236" height="238" fill="#fbfafd"/><g filter="url(#g6)">
<ellipse cx="60" cy="70" rx="50" ry="45" fill="#c9c9e8"/><ellipse cx="62" cy="95" rx="28" ry="22" fill="#fbe9e2"/><ellipse cx="150" cy="50" rx="55" ry="42" fill="#f6b2c4"/><ellipse cx="150" cy="80" rx="26" ry="20" fill="#fbe9e2"/>
<ellipse cx="45" cy="180" rx="42" ry="45" fill="#a9d062"/><ellipse cx="100" cy="165" rx="35" ry="45" fill="#3a3a7a"/><ellipse cx="170" cy="140" rx="40" ry="30" fill="#f4f4fa"/><ellipse cx="200" cy="110" rx="30" ry="40" fill="#b9b4e0"/>
<ellipse cx="180" cy="205" rx="45" ry="30" fill="#4a4a8a"/><ellipse cx="110" cy="222" rx="40" ry="14" fill="#6a6aa8"/>
</g></svg>
</body></html>
